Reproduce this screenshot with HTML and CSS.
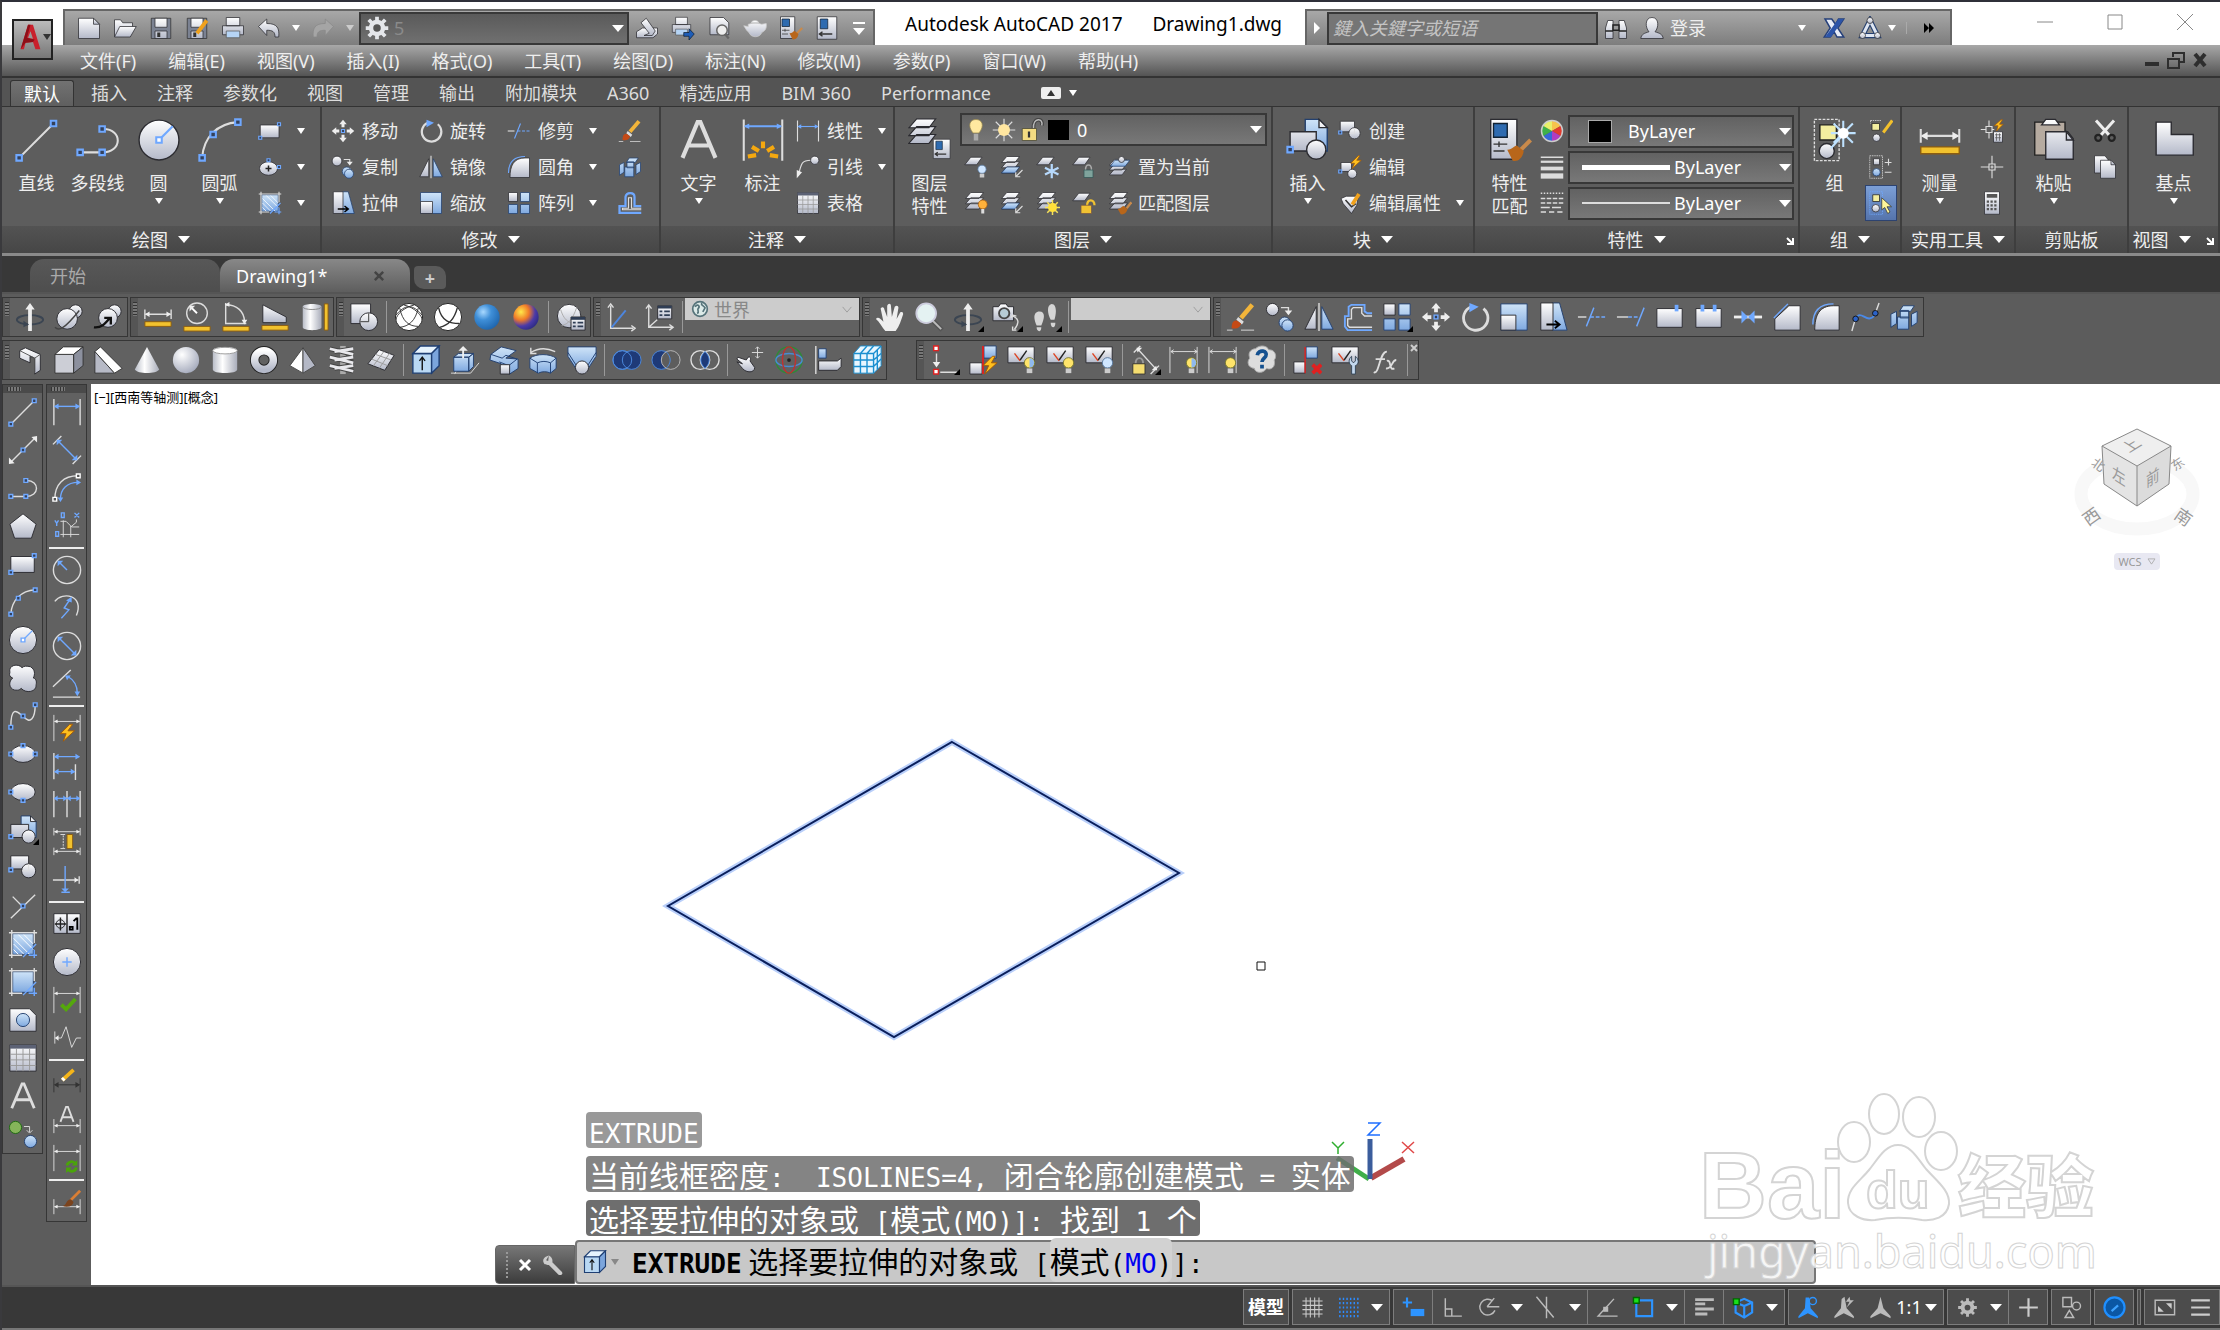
FILE: index.html
```html
<!DOCTYPE html>
<html lang="zh-CN">

<head>
    <meta charset="UTF-8">
    <meta name="viewport" content="width=device-width, initial-scale=1.0">
    <title>Autodesk AutoCAD 2017</title>
    <link rel="stylesheet" href="styles.css">
</head>

<body>
    <!-- icon sprite -->
    <svg class="sprite" aria-hidden="true">
        <defs>
            <linearGradient id="gw" x1="0" y1="0" x2="0" y2="1"><stop offset="0" stop-color="#fff"/><stop offset="1" stop-color="#b4b9c9"/></linearGradient>
            <linearGradient id="gh" x1="0" y1="0" x2="1" y2="0"><stop offset="0" stop-color="#b9bdc8"/><stop offset=".4" stop-color="#fff"/><stop offset="1" stop-color="#a9adba"/></linearGradient>
            <linearGradient id="gb" x1="0" y1="0" x2="0" y2="1"><stop offset="0" stop-color="#cfe4f8"/><stop offset="1" stop-color="#7fa9e0"/></linearGradient>
            <radialGradient id="gs" cx=".35" cy=".3" r=".8"><stop offset="0" stop-color="#fff"/><stop offset="1" stop-color="#9fa5b8"/></radialGradient>
            <radialGradient id="gblue" cx=".35" cy=".3" r=".8"><stop offset="0" stop-color="#a8d8ff"/><stop offset=".4" stop-color="#3f8fd8"/><stop offset="1" stop-color="#1a60a8"/></radialGradient>
            <radialGradient id="gsun" cx=".3" cy=".3" r=".8"><stop offset="0" stop-color="#ffe94a"/><stop offset=".4" stop-color="#f07a28"/><stop offset=".7" stop-color="#4b3aa8"/><stop offset="1" stop-color="#2a2a80"/></radialGradient>
        </defs>

        <!-- draw -->
        <symbol id="line" viewBox="0 0 32 32"><path class="l" d="M3 29 28 4"/><path class="p" d="M1 27h4v4H1zM26 2h4v4h-4z"/></symbol>
        <symbol id="xline" viewBox="0 0 32 32"><path class="l" d="M4 28 28 4"/><path class="f" d="M1 31v-7l6 6zM31 1v7l-6-6z"/><path class="p" d="M14 14h4v4h-4z"/></symbol>
        <symbol id="pline" viewBox="0 0 32 32"><path class="l" d="M3 25h16c15 0 15-17 1-17"/><path class="p" d="M1 23h4v4H1zM17 23h4v4h-4zM17 6h4v4h-4z"/></symbol>
        <symbol id="polygon" viewBox="0 0 32 32"><path class="w" d="M16 3 30 14 25 29H7L2 14z"/></symbol>
        <symbol id="rect" viewBox="0 0 32 32"><path class="w" d="M3 8h25v17H3z"/><path class="p" d="M1 23h4v4H1zM26 5h4v4h-4z"/></symbol>
        <symbol id="arc" viewBox="0 0 32 32"><path class="l" d="M3 29C4 14 14 4 29 3"/><path class="p" d="M1 27h4v4H1zM9 10h4v4H9zM27 1h4v4h-4z"/></symbol>
        <symbol id="circle" viewBox="0 0 32 32"><circle class="w" cx="16" cy="16" r="14.500"/><path class="b" d="M16 16 26 6"/><path class="p q" d="M14 14h4v4h-4z"/></symbol>
        <symbol id="cloud" viewBox="0 0 32 32"><path class="w" d="M15 5c-4-5-15-3-13 5-1 3 0 5 3 6-6 5-3 14 5 13 2 0 3-1 4-2 5 6 17 4 16-4 1-4-1-7-3-7 2-4 2-9-3-12-4-1-7-1-9 1z"/></symbol>
        <symbol id="spline" viewBox="0 0 32 32"><path class="l" d="M3 28c0-28 10-13 13-12 8 10 13 2 13-12"/><path class="p" d="M1 26h4v4H1zM14 14h4v4h-4zM27 2h4v4h-4z"/></symbol>
        <symbol id="ellipse" viewBox="0 0 32 32"><ellipse class="w" cx="16" cy="16" rx="13" ry="9"/><path class="p" d="M1 14h4v4H1zM27 14h4v4h-4zM14 5h4v4h-4z"/></symbol>
        <symbol id="ellipsearc" viewBox="0 0 32 32"><ellipse class="w" cx="16" cy="16" rx="13" ry="9"/><path class="p" d="M1 14h4v4H1zM14 23h4v4h-4z"/></symbol>
        <symbol id="center" viewBox="0 0 32 32"><ellipse class="w" cx="14" cy="18" rx="12" ry="9"/><path d="M14 14v8M10 18h8" stroke="#222" stroke-width="2"/><path class="p" d="M12 5h4v4h-4zM26 14h4v4h-4z"/></symbol>
        <symbol id="insert" viewBox="0 0 32 32"><path class="bl" d="M14 1h10l6 6v17H14z"/><path class="w" d="M24 1v6h6zM3 10h19v14H3z"/><circle class="w" cx="22" cy="23" r="7"/><path class="p" d="M1 21h4v4H1z"/></symbol>
        <symbol id="block" viewBox="0 0 32 32"><path class="w" d="M3 3h19v14H3z"/><circle class="w" cx="22" cy="19" r="7.500"/><path class="l s" d="M22 12v7h-7" stroke="#777"/><path class="p" d="M1 16h4v4H1z"/></symbol>
        <symbol id="point" viewBox="0 0 32 32"><path class="l" d="M3 29 29 4M5 6l11 11"/><path class="p" d="M14 14h4v4h-4z"/></symbol>
        <symbol id="hatch" viewBox="0 0 32 32"><path class="bl" d="M5 5h22v22H5z"/><path d="M6 10l17 17M6 16l11 11M6 22l5 5M11 6l16 16M17 6l10 10" stroke="#fff" stroke-width="1"/><path class="l" d="M1 4h30M4 1v30M1 28h14M28 1v14"/><path class="b" d="M16 30 30 16M22 28h9M28 22v9"/></symbol>
        <symbol id="gradient" viewBox="0 0 32 32"><path class="bl" d="M5 5h22v22H5z"/><path class="l" d="M1 4h30M4 1v30M1 28h14M28 1v14"/><path class="b" d="M16 30 30 16M22 28h9M28 22v9"/></symbol>
        <symbol id="region" viewBox="0 0 32 32"><path class="w" d="M2 4h21l7 7v17H2z"/><circle class="bl" cx="16" cy="16" r="7"/></symbol>
        <symbol id="table" viewBox="0 0 32 32"><path class="w" d="M2 2h28v28H2z"/><path d="M2 2h28v4H2z" fill="#5c6275"/><path d="M9 6v24M16 6v24M23 6v24M2 12h28M2 18h28M2 24h28" stroke="#999"/></symbol>
        <symbol id="mtext" viewBox="0 0 32 32"><path d="M4 29 15 3h2l11 26M8 20h16" fill="none" stroke="#ddd" stroke-width="3"/></symbol>
        <symbol id="addsel" viewBox="0 0 32 32"><circle cx="8" cy="9" r="6.500" fill="#85b55a" stroke="#1d6a10"/><circle class="bl" cx="24" cy="24" r="6.500"/><path class="l s" d="M17 8h6v6M20 12l3 3 3-3"/></symbol>

        <!-- dimension -->
        <symbol id="dimlin" viewBox="0 0 32 32"><path class="l" d="M2 2v28M30 2v28"/><path class="b" d="M3 10h26"/><path class="fb" d="M2 10l5-3v6zM30 10l-5-3v6z"/></symbol>
        <symbol id="dimali" viewBox="0 0 32 32"><path class="l" d="M1 10 10 1M22 31l9-9"/><path class="b" d="M7 7 25 25"/><path class="fb" d="M5 5h6l-6 6zM27 27h-6l6-6z"/></symbol>
        <symbol id="dimarc" viewBox="0 0 32 32"><path class="l" d="M3 28C3 12 12 3 28 3"/><path class="b" d="M9 28c0-11 7-18 19-18"/><path class="fb" d="M9 31l-3-5h6zM31 10l-5-3v6z"/><path class="o" d="M1 26h4v4H1zM26 1h4v4h-4z"/></symbol>
        <symbol id="dimord" viewBox="0 0 32 32"><path class="b s" d="M10 2h3v5h-3zM24 2l5 5M29 2l-5 5M3 10l2 3 2-3M5 13v3M4 22h3v5H4z"/><path class="l s" d="M12 10v18M20 16v12M9 25h20M9 11h6l6 6h8M20 17l6-5V9"/></symbol>
        <symbol id="dimrad" viewBox="0 0 32 32"><circle class="l" cx="16" cy="16" r="14.500"/><path class="b" d="M16 16 8 8"/><path class="fb" d="M6 6h6l-6 6z"/></symbol>
        <symbol id="dimjog" viewBox="0 0 32 32"><path class="l" d="M3 9C11-2 35 2 26 24"/><path class="b" d="M10 27l8-9-5-2 6-9"/><path class="fb" d="M21 4v6l-6-2z"/></symbol>
        <symbol id="dimdia" viewBox="0 0 32 32"><circle class="l" cx="16" cy="16" r="14.500"/><path class="b" d="M8 8 24 24"/><path class="fb" d="M6 6h6l-6 6zM26 26h-6l6-6z"/></symbol>
        <symbol id="dimang" viewBox="0 0 32 32"><path class="l" d="M1 19 20 1M1 30h29"/><path class="b" d="M17 8c7 4 10 10 10 18"/><path class="fb" d="M14 7h6l-4 5zM27 29l-3-5h6z"/></symbol>
        <symbol id="dimquick" viewBox="0 0 32 32"><use href="#dimgrey"/><path class="bolt" d="M19 12 9 22h6l-3 8 12-11h-7l5-7z"/></symbol>
        <symbol id="dimbase" viewBox="0 0 32 32"><path class="l" d="M2 2v28M25 14v17"/><path class="b" d="M3 6h26M3 22h21"/><path class="fb" d="M2 6l5-3v6zM30 6l-5-3v6zM2 22l5-3v6zM25 22l-5-3v6z"/></symbol>
        <symbol id="dimcont" viewBox="0 0 32 32"><path class="l" d="M2 2v28M16 2v28M30 2v28"/><path class="b" d="M3 10h26"/><path class="fb" d="M2 10l4-3v6zM16 10l-4-3v6zM16 10l4-3v6zM30 10l-4-3v6z"/></symbol>
        <symbol id="dimspace" viewBox="0 0 32 32"><path class="l s" d="M2 1v8M30 1v8M2 22v8M30 22v8M3 5h26M3 26h26M9 8h5M9 23h5"/><path class="l s" d="M12 9v13" stroke-dasharray="2 1"/><path class="f" d="M2 5l4-2v4zM30 5l-4-2v4zM2 26l4-2v4zM30 26l-4-2v4z"/><path class="rule" d="M16 8h6v15h-6z"/></symbol>
        <symbol id="dimbreak" viewBox="0 0 32 32"><path class="l" d="M1 16h27M29 12v8"/><path class="b" d="M14 1v26M10 29h9"/><path class="f" d="M28 16l-4-3v6z"/><path class="fb" d="M14 29l-4-4h8z"/></symbol>
        <symbol id="tol" viewBox="0 0 32 32"><path class="w" d="M2 5h28v21H2z"/><path d="M16 5v21M9 9v14M3 16h12" stroke="#222" stroke-width="1.500"/><circle cx="9" cy="16" r="4.500" fill="none" stroke="#222"/><path d="M19 19h3v3h-3zM23 13l3-3h1v12" fill="none" stroke="#000" stroke-width="2"/></symbol>
        <symbol id="cmark" viewBox="0 0 32 32"><circle class="w" cx="16" cy="16" r="14.500"/><path class="b" d="M16 11v10M11 16h10"/></symbol>
        <symbol id="dimgrey" viewBox="0 0 32 32"><path class="l s" d="M2 2v28M30 2v28M3 9h26"/><path class="f" d="M2 9l4-2v4zM30 9l-4-2v4z"/></symbol>
        <symbol id="inspect" viewBox="0 0 32 32"><use href="#dimgrey"/><path d="M10 21l5 5 10-11" fill="none" stroke="#55a80c" stroke-width="4"/></symbol>
        <symbol id="jogline" viewBox="0 0 32 32"><path class="l s" d="M3 9v13M4 16h6l5-12 6 22 5-10h5"/><path class="f" d="M3 16l4-3v6z"/></symbol>
        <symbol id="dimedit" viewBox="0 0 32 32"><path d="M2 12v15M30 12v15M3 19h26" stroke="#333"/><path d="M2 19l5-3v6zM30 19l-5-3v6z" fill="#333"/><path d="M11 14 23 3" stroke="#f5b51a" stroke-width="4"/><path d="M11 14l2-2" stroke="#fff" stroke-width="4"/></symbol>
        <symbol id="dimtedit" viewBox="0 0 32 32"><path d="M9 18 15 2h2l6 16M11 13h10" fill="none" stroke="#ddd" stroke-width="2"/><path class="l s" d="M2 15v15M30 15v15M3 22h26"/><path class="f" d="M2 22l4-2v4zM30 22l-4-2v4z"/></symbol>
        <symbol id="dimupdate" viewBox="0 0 32 32"><use href="#dimgrey"/><path d="M16 24a5 5 0 0 1 9-2M26 26a5 5 0 0 1-9 2" fill="none" stroke="#4aa30a" stroke-width="3"/><path d="M27 18v6h-6zM15 32v-6h6z" fill="#4aa30a"/></symbol>
        <symbol id="dimstyle" viewBox="0 0 32 32"><path class="l s" d="M2 13v16M30 13v16M3 21h26"/><path class="f" d="M2 21l4-2v4zM30 21l-4-2v4z"/><path d="M20 14 30 4" stroke="#d97e35" stroke-width="3"/><path d="M11 20c5 0 3-6 9-7l3 3c-1 5-7 6-12 4z" fill="#7b431d"/></symbol>

        <!-- modify -->
        <symbol id="erase" viewBox="0 0 32 32"><path d="M16 17 28 3" stroke="#f3b53a" stroke-width="5"/><path d="M13 16l6 5-2 3-6-5z" fill="#ddd"/><path d="M6 28c0-6 2-9 6-8l4 3c-1 5-5 6-10 5z" fill="#c54a16"/><path class="l s" d="M1 30h6M16 30h14"/></symbol>
        <symbol id="copy" viewBox="0 0 32 32"><circle class="w" cx="8" cy="8" r="6.500"/><circle class="bl" cx="21" cy="22" r="6"/><circle class="bl" cx="24" cy="25" r="6"/><path class="l" d="M17 6h8v5"/><path class="f" d="M25 14l-4-5h8z"/></symbol>
        <symbol id="mirror" viewBox="0 0 32 32"><path class="w" d="M13 5v24H1z"/><path class="bl" d="M19 5v24h12z"/><path class="l" d="M16 1v30"/></symbol>
        <symbol id="offset" viewBox="0 0 32 32"><path d="M31 30H5l-3-4V15h4V5l3-2h14v7l3 2h5" fill="none" stroke="#6fa8ff" stroke-width="2"/><path class="l" d="M31 27H7l-2-2v-7h4V8l2-2h9v6l3 3h8"/></symbol>
        <symbol id="stamp" viewBox="0 0 32 32"><path d="M31 29H2v-9h8V8c1-7 12-7 12 0v12h9" fill="none" stroke="#6fa8ff" stroke-width="3"/><path class="l" d="M31 25H6v-2h8V9h4v14h13"/></symbol>
        <symbol id="array" viewBox="0 0 32 32"><path class="w" d="M2 2h12v12H2z"/><path class="bl" d="M18 2h12v12H18zM2 18h12v12H2zM18 18h12v12H18z"/></symbol>
        <symbol id="move" viewBox="0 0 32 32"><path class="f" d="M16 1l5 6h-3v4h-4V7h-3zM16 31l5-6h-3v-4h-4v4h-3zM1 16l6-5v3h4v4H7v3zM31 16l-6-5v3h-4v4h4v3z"/><path class="p" d="M14 14h4v4h-4z"/></symbol>
        <symbol id="rotate" viewBox="0 0 32 32"><path d="M12 5a13 13 0 1 0 13 2" fill="none" stroke="#ddd" stroke-width="3"/><path class="fb" d="M10 1l10 4-10 6z"/></symbol>
        <symbol id="scale" viewBox="0 0 32 32"><path class="bl" d="M2 2h28v28H2z"/><path class="w" d="M2 14h16v16H2z"/></symbol>
        <symbol id="stretch" viewBox="0 0 32 32"><path class="bl" d="M15 1h8l8 29H15z"/><path class="w" d="M3 1h13v29H3z"/><path d="M9 24h13M18 20l5 4-5 4" fill="none" stroke="#000" stroke-width="2"/></symbol>
        <symbol id="trim" viewBox="0 0 32 32"><path class="l" d="M1 16h9"/><path class="b" d="M10 26 18 6"/><path class="b" d="M14 16h17" stroke-dasharray="4 2"/></symbol>
        <symbol id="extend" viewBox="0 0 32 32"><path class="l" d="M1 16h12"/><path class="b" d="M13 16h11" stroke-dasharray="4 2"/><path class="b" d="M22 26 30 6"/></symbol>
        <symbol id="breakpt" viewBox="0 0 32 32"><path class="w" d="M2 7h27v20H2z"/><path class="fb" d="M21 3h4v7h-4z"/></symbol>
        <symbol id="break" viewBox="0 0 32 32"><path class="w" d="M2 7h27v20H2z"/><path class="fb" d="M7 3h4v7H7zM20 3h4v7h-4z"/></symbol>
        <symbol id="join" viewBox="0 0 32 32"><path d="M1 16h30" stroke="#eee" stroke-width="3"/><path class="fb" d="M9 9l7 7-7 7zM23 9l-7 7 7 7z"/></symbol>
        <symbol id="chamfer" viewBox="0 0 32 32"><path class="w" d="M3 30V18L18 4h12v26z"/><path class="b" d="M2 17 17 2"/></symbol>
        <symbol id="fillet" viewBox="0 0 32 32"><path class="w" d="M4 30C4 14 9 4 24 4h6v26z"/><path class="b" d="M2 24C2 8 10 2 24 2"/></symbol>
        <symbol id="blend" viewBox="0 0 32 32"><path class="l" d="M2 31l4-14M27 12l4-11"/><path d="M6 18c6-12 12 8 21-5" fill="none" stroke="#4b8ae8" stroke-width="2"/><circle cx="6" cy="18" r="3" fill="#2b62c8" stroke="#111"/><circle cx="27" cy="12" r="3" fill="#2b62c8" stroke="#111"/></symbol>
        <symbol id="explode" viewBox="0 0 32 32"><path class="bl" d="M15 4h12l-4 6H11zM2 13l6-3v13l-6 4zM24 13l6-3v12l-6 4zM12 9h9v8h-9zM9 16h12v13H9z"/></symbol>

        <!-- orbit, measure and visual styles -->
        <symbol id="orbit" viewBox="0 0 32 32"><ellipse cx="16" cy="19" rx="14" ry="5" fill="none" stroke="#3b4552" stroke-width="2"/><path class="f" d="M16 1l5 7h-3v23h-4V8h-3z"/><path d="M9 20l6 4-6 3z" fill="#3b4552"/></symbol>
        <symbol id="forbit" viewBox="0 0 32 32"><circle class="w" cx="23" cy="10" r="7"/><circle class="w" cx="14" cy="18" r="11"/><path d="M1 27c4 4 9 3 26-18" fill="none" stroke="#444" stroke-width="1.500"/></symbol>
        <symbol id="corbit" viewBox="0 0 32 32"><circle class="w" cx="23" cy="10" r="7"/><circle class="w" cx="16" cy="17" r="10"/><path d="M1 27c8 1 12-4 17-10M12 17h7v7" fill="none" stroke="#111" stroke-width="2.500"/></symbol>
        <symbol id="dist" viewBox="0 0 32 32"><path class="l" d="M2 8v10M30 8v10M3 13h26"/><path class="f" d="M2 13l5-3v6zM30 13l-5-3v6z"/><path class="rule" d="M2 21h28v5H2z"/></symbol>
        <symbol id="mrad" viewBox="0 0 32 32"><circle class="l" cx="16" cy="12" r="11"/><path d="M16 12 10 6" stroke="#fff" stroke-width="2"/><path class="f" d="M8 4h6l-6 6z"/><path class="rule" d="M2 26h28v5H2z"/></symbol>
        <symbol id="mang" viewBox="0 0 32 32"><path class="l" d="M5 1v22h22M5 3c12 0 20 7 20 18"/><path class="f" d="M4 3l5-3v5zM25 24l-3-5h6z"/><path class="rule" d="M2 26h28v5H2z"/></symbol>
        <symbol id="marea" viewBox="0 0 32 32"><path class="w" d="M3 3v19h25v-6z"/><path class="rule" d="M2 25h28v5H2z"/></symbol>
        <symbol id="mvol" viewBox="0 0 32 32"><path d="M4 5c0-4 20-4 20 0v22c0 4-20 4-20 0z" fill="url(#gh)"/><path d="M4 5c0 4 20 4 20 0" fill="none" stroke="#888"/><path class="rule" d="M27 2h4v28h-4z"/></symbol>
        <symbol id="wf2d" viewBox="0 0 32 32"><path class="w" d="M2 2h21v21H2z"/><circle class="w" cx="21" cy="21" r="9.500"/><path d="M12 21h9V12" fill="none" stroke="#333"/></symbol>
        <symbol id="wf" viewBox="0 0 32 32"><circle cx="16" cy="16" r="14.500" fill="#fff" stroke="#222"/><path d="M6 6c3 15 10 20 20 20M26 6C23 20 16 26 6 27M2 14C12 2 20 2 30 14M10 3c13 3 20 12 20 16M22 3C10 6 3 13 2 19" fill="none" stroke="#333"/></symbol>
        <symbol id="hidden" viewBox="0 0 32 32"><circle cx="16" cy="16" r="14.500" fill="#fff" stroke="#222"/><path d="M6 6c3 15 13 17 22 17M26 6C23 18 16 25 7 27" fill="none" stroke="#333" stroke-width="1.500"/></symbol>
        <symbol id="realistic" viewBox="0 0 32 32"><circle cx="16" cy="16" r="13.500" fill="url(#gblue)"/></symbol>
        <symbol id="concept" viewBox="0 0 32 32"><circle cx="16" cy="16" r="13.500" fill="url(#gsun)"/></symbol>
        <symbol id="vsman" viewBox="0 0 32 32"><circle class="w" cx="14" cy="15" r="12.500"/><path d="M5 8c4 14 12 16 21 15M22 6c-4 12-9 18-16 19" fill="none" stroke="#aaa"/><use href="#dlg" x="15" y="15" width="17" height="16"/></symbol>
        <symbol id="dlg" viewBox="0 0 17 16"><path class="w" d="M1 1h15v14H1z"/><path d="M1 1h15v3H1z" fill="#2f3d54"/><path d="M3 7h3M3 11h3M8 7h6M8 11h6" stroke="#2f3d54" stroke-width="2"/></symbol>
        <symbol id="ucs" viewBox="0 0 32 32"><path class="l" d="M5 4v24h24M2 6l3-4 3 4M27 25l4 3-4 3"/><path d="M6 27 21 9" stroke="#4d86df" stroke-width="2"/></symbol>
        <symbol id="ucsman" viewBox="0 0 32 32"><path class="l" d="M4 4v23h25M1 7l3-4 3 4M26 24l4 3-4 3M4 27l9-8"/><use href="#dlg" x="12" y="3" width="18" height="16"/></symbol>
        <symbol id="globe" viewBox="0 0 32 32"><circle cx="16" cy="16" r="13" fill="#dceae8" stroke="#56737a" stroke-width="3"/><path d="M7 12c6-7 9 0 6 3s3 6-2 9M19 5c-2 5 3 4 6 9l-4 7" fill="none" stroke="#56737a" stroke-width="3"/></symbol>

        <!-- navigation -->
        <symbol id="pan" viewBox="0 0 32 32"><path class="f" d="M11 31C7 26 5 21 1 18c2-3 5 0 8 3L6 7c2-3 4-1 4 1l3 8V4c1-3 4-3 4 0l1 12 3-11c2-2 4-1 4 1l-2 12 4-7c3-1 3 1 3 2-2 6-4 13-8 18z"/></symbol>
        <symbol id="zoom" viewBox="0 0 32 32"><path d="M20 20l10 10" stroke="#555" stroke-width="5"/><path d="M20 20l9 9" stroke="#bbb" stroke-width="2"/><circle cx="13" cy="12" r="10.500" fill="#e4f2f2" stroke="#ccd" stroke-width="2"/></symbol>
        <symbol id="camera" viewBox="0 0 32 32"><path class="w" d="M1 5h6l2-3h6l2 3h6v15H1z"/><circle cx="13" cy="12" r="5.500" fill="#b6cbd6" stroke="#444" stroke-width="2"/><path class="l" d="M22 15c6 2 8 7 2 14M20 17l2-3 4 1M22 26v4h4"/></symbol>
        <symbol id="walk" viewBox="0 0 32 32"><path d="M9 10c6 0 6 6 2 15H6C2 17 3 10 9 10zM6 27h5c0 6-5 5-5 0zM22 2c6 0 5 11 3 17h-4c-4-8-4-16 1-17zM21 22h5c0 7-5 6-5 0z" fill="#d5d5d5"/></symbol>

        <!-- solids -->
        <symbol id="psolid" viewBox="0 0 32 32"><path class="w" d="M5 6l6-3 16 7v17l-6 4V14l-5-2v7l-11-5z"/><path d="M5 6l16 8 6-4M21 14v16" fill="none" stroke="#555"/></symbol>
        <symbol id="box" viewBox="0 0 32 32"><path d="M1 10h20v20H1z" fill="#ccced6" stroke="#333"/><path d="M1 10l9-8h21l-10 8z" fill="#fff" stroke="#333"/><path d="M31 2v20l-10 8V10z" fill="#8c909e" stroke="#333"/></symbol>
        <symbol id="wedge" viewBox="0 0 32 32"><path d="M2 7v23h21z" fill="#b7bac6" stroke="#333"/><path d="M2 7l6-5 23 23-8 5z" fill="#fff" stroke="#333"/></symbol>
        <symbol id="cone" viewBox="0 0 32 32"><path d="M16 2 29 26c-3 5-23 5-26 0z" fill="url(#gh)"/></symbol>
        <symbol id="sphere" viewBox="0 0 32 32"><circle cx="16" cy="16" r="14" fill="url(#gs)"/></symbol>
        <symbol id="cyl" viewBox="0 0 32 32"><path d="M3 6c0-5 26-5 26 0v20c0 5-26 5-26 0z" fill="url(#gh)"/><ellipse cx="16" cy="6" rx="13" ry="3.500" fill="#fff" stroke="#999"/></symbol>
        <symbol id="torus" viewBox="0 0 32 32"><circle cx="16" cy="16" r="10" fill="none" stroke="#222" stroke-width="10"/><circle cx="16" cy="16" r="10" fill="none" stroke="url(#gw)" stroke-width="8"/></symbol>
        <symbol id="pyr" viewBox="0 0 32 32"><path d="M16 3 2 22l14 8z" fill="#fff" stroke="#444"/><path d="M16 3l13 19-13 8z" fill="#b4b8c6" stroke="#444"/></symbol>
        <symbol id="helix" viewBox="0 0 32 32"><path d="M17 1v30" stroke="#aaa" stroke-width="6"/><path d="M3 4l25 6M3 13l25 6M3 22l25 6M28 4 8 7M28 13 8 16M28 22 8 25" stroke="#444" stroke-width="5"/><path d="M3 4l25 6M3 13l25 6M3 22l25 6M28 4 8 7M28 13 8 16M28 22 8 25" stroke="#e8e8ec" stroke-width="3"/></symbol>
        <symbol id="plane" viewBox="0 0 32 32"><path class="w" d="M14 5l16 6-10 16L2 20z"/><path d="M19 7 8 22M25 9 14 25M10 10l17 6M6 15l17 7" stroke="#999"/></symbol>
        <symbol id="extrude" viewBox="0 0 32 32"><path d="M2 9h20v21H2z" fill="#b9d8f3" stroke="#1f3f73" stroke-width="1.500"/><path d="M2 9l8-8h20l-8 8z" fill="#e6f3fd" stroke="#1f3f73" stroke-width="1.500"/><path d="M30 1v21l-8 8V9z" fill="#7ba5dc" stroke="#1f3f73" stroke-width="1.500"/><path d="M12 27V14M9 17l3-4 3 4" fill="none" stroke="#111" stroke-width="1.500"/></symbol>
        <symbol id="presspull" viewBox="0 0 32 32"><path class="l s" d="M1 30h21l9-11M5 31l4-8"/><path class="bl" d="M4 13h16v15H4zM4 13l5-4h16l-5 4zM25 9v14l-5 5V13z"/><path class="f" d="M14 1l5 5h-4v8h-2V6H9z"/></symbol>
        <symbol id="sweep" viewBox="0 0 32 32"><path class="bl" d="M2 10 13 2l16 4-11 8 13 1v10l-9 6-9-4v-7L1 16z"/><path d="M2 10l12 4 4-3 12 4-9 7-10-4" fill="none" stroke="#1f3f73"/><path class="w" d="M12 21h10v10H12z"/></symbol>
        <symbol id="revolve" viewBox="0 0 32 32"><path class="bl" d="M2 14c7-5 21-5 28 0v11l-6 5c-4-2-9-2-13 0l-9-5z"/><path d="M2 14l8 5c5-2 9-2 14 0l6-5M10 19v11M24 19v11" fill="none" stroke="#1f3f73"/><path class="l" d="M3 8c8-5 17-5 26-1M3 3v6h6"/></symbol>
        <symbol id="loft" viewBox="0 0 32 32"><path class="bl" d="M1 2h30v10l-9 14H10L1 12z"/><path d="M1 8 10 22M31 8l-9 14" stroke="#1f3f73"/><circle class="w" cx="16" cy="24" r="7"/></symbol>
        <symbol id="union" viewBox="0 0 32 32"><circle cx="11" cy="16" r="10" fill="#1e3a78" stroke="#4d8be0"/><circle cx="21" cy="16" r="10" fill="#1e3a78" stroke="#4d8be0"/><circle cx="11" cy="16" r="10" fill="none" stroke="#4d8be0"/></symbol>
        <symbol id="subtract" viewBox="0 0 32 32"><circle cx="11" cy="16" r="10" fill="#1e3a78" stroke="#4d8be0"/><circle cx="21" cy="16" r="10" fill="#5d5d5d" stroke="#bbb"/><path d="M16 7c6 6 6 12 0 18" fill="none" stroke="#4d8be0"/></symbol>
        <symbol id="intersect" viewBox="0 0 32 32"><circle class="l" cx="11" cy="16" r="10"/><circle class="l" cx="21" cy="16" r="10"/><path d="M16 7c6 6 6 12 0 18-6-6-6-12 0-18z" fill="#1e3a78" stroke="#4d8be0"/></symbol>
        <symbol id="move3d" viewBox="0 0 32 32"><path class="w" d="M3 13l9 3 2-3c3-1 3 2 2 4l5 7c0 6-9 6-13 1l-6-7 6 2-6-5z"/><path class="l s" d="M24 2v12M18 8h12M22 4l2-2 2 2M22 12l2 2 2-2"/></symbol>
        <symbol id="rot3d" viewBox="0 0 32 32"><circle class="ring" cx="16" cy="16" r="14" stroke="#2f8a38"/><ellipse class="ring" cx="16" cy="16" rx="14" ry="7" stroke="#4a8ad0"/><ellipse class="ring" cx="16" cy="16" rx="7" ry="14" stroke="#c03030"/><circle cx="16" cy="16" r="2" fill="#222"/></symbol>
        <symbol id="align3d" viewBox="0 0 32 32"><path class="l" d="M3 1v30"/><path class="bl" d="M6 4h8v10H6z"/><path class="w" d="M6 17h20l4-3v9l-4 4H6z"/></symbol>
        <symbol id="array3d" viewBox="0 0 32 32"><path d="M2 9 9 1h22v21l-8 8H2z" fill="#e8f6ff" stroke="#1b8fd0"/><path d="M2 9h21v21M23 9l8-8M9 9v21M16 9v21M2 16h21l8-7M2 23h21l8-8M9 9l7-8M16 9l7-8M27 5v21" fill="none" stroke="#1b8fd0" stroke-width="1.500"/></symbol>

        <!-- parametric -->
        <symbol id="autocon" viewBox="0 0 32 32"><path class="red" d="M5 1h5v5H5zM5 26h5v5H5z"/><path class="l" d="M8 9v10M12 29h18"/><path class="f" d="M8 24l-4-6h8z"/></symbol>
        <symbol id="gcon" viewBox="0 0 32 32"><path class="bl" d="M17 1h13v13H17z"/><path class="w" d="M2 19h13v12H2z"/><path d="M16 1v30" stroke="#d22" stroke-width="2"/><path class="bolt" d="M26 12 16 22h6l-4 9 13-12h-6l4-7z"/></symbol>
        <symbol id="conbar" viewBox="0 0 32 32"><path class="w" d="M1 2h28v17H1z"/><path d="M8 9l6 8" stroke="#d42" stroke-width="1.500"/><path d="M14 16l7-10" stroke="#222" stroke-width="1.500"/></symbol>
        <symbol id="bulb" viewBox="0 0 32 32"><circle cx="24" cy="19" r="5.500" fill="#ffe46a" stroke="#7a7a30"/><path d="M21 25h6v5h-6z" fill="#ccc"/></symbol>
        <symbol id="bulbb" viewBox="0 0 32 32"><circle cx="24" cy="19" r="5.500" fill="#cfe6ff" stroke="#5a7aa0"/><path d="M21 25h6v5h-6z" fill="#ccc"/></symbol>
        <symbol id="conhalf" viewBox="0 0 32 32"><use href="#conbar"/><use href="#bulb"/><path d="M24 14a5 5 0 0 1 0 10z" fill="#8fb9ee"/></symbol>
        <symbol id="conshow" viewBox="0 0 32 32"><use href="#conbar"/><use href="#bulb"/></symbol>
        <symbol id="conhide" viewBox="0 0 32 32"><use href="#conbar"/><use href="#bulbb"/></symbol>
        <symbol id="dcon" viewBox="0 0 32 32"><path class="l" d="M8 4 28 26M4 8l7-7M22 31l9-9"/><path class="f" d="M7 3h6l-5 5zM29 27h-6l5-5z"/><path d="M6 20c0-8 8-8 8 0" fill="none" stroke="#999" stroke-width="2"/><path d="M3 20h13v11H3z" fill="#f5dd70" stroke="#333"/></symbol>
        <symbol id="dconhalf" viewBox="0 0 32 32"><path class="l s" d="M1 2v28M30 2v28M2 7h28M5 5 2 7l3 2M27 5l3 2-3 2"/><use href="#bulb"/><path d="M24 14a5 5 0 0 1 0 10z" fill="#8fb9ee"/></symbol>
        <symbol id="dconshow" viewBox="0 0 32 32"><path class="l s" d="M1 2v28M30 2v28M2 7h28M5 5 2 7l3 2M27 5l3 2-3 2"/><use href="#bulb"/></symbol>
        <symbol id="infer" viewBox="0 0 32 32"><path d="M9 4c5-5 13-3 14 1 8 0 9 8 6 11 2 8-4 11-8 9-5 7-13 4-13 0-8-1-8-8-5-11-3-7 3-10 6-10z" fill="#ddd" stroke="#aaa"/><path d="M11 11c1-7 12-5 9 1-1 2-4 3-4 6M16 21v4" fill="none" stroke="#14508f" stroke-width="4"/></symbol>
        <symbol id="delcon" viewBox="0 0 32 32"><path class="bl" d="M15 2h12v12H15z"/><path class="w" d="M2 18h12v12H2z"/><path d="M14 2v28" stroke="#d22" stroke-width="1.500"/><path d="M22 21l9 9M31 21l-9 9" stroke="#e02020" stroke-width="4"/></symbol>
        <symbol id="conset" viewBox="0 0 32 32"><use href="#conbar"/><path d="M26 12v5l-2 2-2-2v-5c-4 3-3 9 0 10v9h4v-9c4-1 4-7 0-10z" fill="#c3d8ee" stroke="#345"/></symbol>
        <symbol id="params" viewBox="0 0 32 32"><path d="M4 29c6 3 6-22 14-22M6 15h10M18 17c5-2 2 11 8 8M28 16c-5 0-4 10-11 9" fill="none" stroke="#ddd" stroke-width="2"/></symbol>

        <!-- file and title icons -->
        <symbol id="new" viewBox="0 0 32 32"><path class="w" d="M2 3h20l8 8v19H2z"/><path class="w" d="M22 3v8h8z"/></symbol>
        <symbol id="open" viewBox="0 0 32 32"><path class="w" d="M2 28V5h8l3 4h13v5"/><path class="w" d="M2 28 9 14h22l-8 14z"/></symbol>
        <symbol id="save" viewBox="0 0 32 32"><path d="M3 3h26v27H3z" fill="#7b8292" stroke="#333"/><path class="w" d="M8 3h16v12H8zM8 20h16v10H8z"/><path d="M11 22h4v6h-4z" fill="#333"/></symbol>
        <symbol id="saveas" viewBox="0 0 32 32"><use href="#save"/><path d="M16 23 29 6" stroke="#f0a11c" stroke-width="5"/></symbol>
        <symbol id="print" viewBox="0 0 32 32"><path class="w" d="M7 2h18v11H7zM2 13h28v12H2z"/><path d="M7 20h18v9H7z" fill="#b5d4f5" stroke="#555"/></symbol>
        <symbol id="undo" viewBox="0 0 32 32"><path class="w" d="M2 14 13 4v6c14 0 17 6 16 18h-5c0-7-3-9-11-9v7z"/></symbol>
        <symbol id="redo" viewBox="0 0 32 32"><path d="M30 14 19 4v6C5 10 2 16 3 28h5c0-7 3-9 11-9v7z" fill="#a5a5a5" stroke="#888"/></symbol>
        <symbol id="gear" viewBox="0 0 32 32"><path d="M16 1v30M1 16h30M5 5l22 22M27 5 5 27" stroke="#e4e6ea" stroke-width="5"/><circle cx="16" cy="16" r="8" fill="none" stroke="#e4e6ea" stroke-width="6"/><circle cx="16" cy="16" r="5" fill="#555"/></symbol>
        <symbol id="sheet" viewBox="0 0 32 32"><path class="w" d="M2 21l8-5h20v8l-6 5H2z"/><path class="w" d="M8 9l7-6 12 17-4 6H12l7-3z"/></symbol>
        <symbol id="plot" viewBox="0 0 32 32"><use href="#print" width="28" height="28"/><path d="M17 22h7v-5l7 7-7 8v-5h-7z" fill="#1e5db8" stroke="#123"/></symbol>
        <symbol id="preview" viewBox="0 0 32 32"><path class="w" d="M4 2h18l7 7v16H4z"/><circle cx="20" cy="19" r="7" fill="#eee" stroke="#666" stroke-width="2"/><path d="M24 24l5 6" stroke="#666" stroke-width="3"/></symbol>
        <symbol id="teapot" viewBox="0 0 32 32"><path d="M7 11c5-2 14-2 18 0l6-1c1 7-2 10-6 12-2 7-14 8-17 0-3-2-5-6-7-9l6 1zM11 9c1-4 9-4 10 0z" fill="url(#gw)" stroke="#ccc"/></symbol>
        <symbol id="prop" viewBox="0 0 32 32"><path class="w" d="M3 1h26v30H3z"/><path d="M7 4h10v13H7z" fill="#2e6bb0" stroke="#123"/><path d="M7 24h16M10 21l-4 3 4 3" fill="none" stroke="#333" stroke-width="2"/></symbol>
        <symbol id="match" viewBox="0 0 32 32"><path class="w" d="M2 1h19v29H2z"/><path d="M4 4h10v10H4z" fill="#2e6bb0" stroke="#123"/><path d="M4 19h10M4 24h8M8 17v4" stroke="#333"/><path d="M23 24 31 16" stroke="#c98a4b" stroke-width="3"/><path d="M14 23c4 0 5-3 7-3l5 4c-1 6-5 8-8 7z" fill="#b8661a"/></symbol>
        <symbol id="binoc" viewBox="0 0 32 32"><path class="w" d="M5 6h7v24H2V16zM27 6h-7v24h10V16z"/><path d="M12 12h8v7h-8zM2 20h10M20 20h10" fill="#999" stroke="#222" stroke-width="2"/></symbol>
        <symbol id="user" viewBox="0 0 32 32"><path class="w" d="M1 30c1-6 5-7 11-9-5-5-6-19 4-19s9 14 4 19c6 2 10 3 11 9z"/></symbol>
        <symbol id="exch" viewBox="0 0 32 32"><path d="M4 4h9l5 7 4-7h7l-8 12 8 12h-9l-4-7-5 7H3l8-12z" fill="#e6ebf6" stroke="#26407a" stroke-width="2"/><path d="M22 4h7L12 28H4z" fill="#2c54a8"/></symbol>
        <symbol id="a360" viewBox="0 0 32 32"><path d="M16 6 6 26h20z" fill="none" stroke="#26406f" stroke-width="7"/><path d="M16 6 6 26h20z" fill="none" stroke="#dfe6f2" stroke-width="4"/><circle cx="16" cy="6" r="4" class="w"/><circle cx="6" cy="26" r="4" class="w"/><circle cx="26" cy="26" r="4" class="w"/></symbol>

        <!-- layers and properties -->
        <symbol id="stack" viewBox="0 0 32 32"><path class="w" d="M9 16h17l-6 8H2zM9 9h17l-6 8H2zM9 2h17l-6 8H2z"/></symbol>
        <symbol id="layerprop" viewBox="0 0 32 32"><use href="#stack" x="-1" y="-1" width="26" height="26"/><use href="#prop" x="17" y="13" width="15" height="19"/></symbol>
        <symbol id="sheet1" viewBox="0 0 32 32"><path class="w" d="M9 3h15l-7 10H1z"/></symbol>
        <symbol id="loff" viewBox="0 0 32 32"><use href="#sheet1"/><use href="#bulbb"/></symbol>
        <symbol id="liso" viewBox="0 0 32 32"><use href="#stack"/><path class="bl" d="M9 16h17l-6 8H2z"/><path class="l" d="M30 20l-8 8M21 23v6h6"/></symbol>
        <symbol id="lfrz" viewBox="0 0 32 32"><use href="#sheet1"/><path d="M21 12v19M12 17l18 9M30 17l-18 9" stroke="#b6d8fb" stroke-width="3"/></symbol>
        <symbol id="llck" viewBox="0 0 32 32"><use href="#sheet1"/><path d="M18 20c0-9 8-9 8 0" fill="none" stroke="#aaa" stroke-width="2"/><path d="M16 20h12v10H16z" fill="#7fa39c" stroke="#355"/></symbol>
        <symbol id="lcur" viewBox="0 0 32 32"><use href="#stack" y="4" width="30" height="30"/><path class="bl" d="M9 7h20l-6 8H3z"/><circle class="w" cx="18" cy="6" r="4"/></symbol>
        <symbol id="lon" viewBox="0 0 32 32"><use href="#stack"/><circle cx="25" cy="18" r="6" fill="#ffb13b" stroke="#a55b10"/><path d="M23 24h4v6h-4z" fill="#ddd"/></symbol>
        <symbol id="lthw" viewBox="0 0 32 32"><use href="#stack"/><path d="M22 12v20M12 22h20M15 15l14 14M29 15 15 29" stroke="#f6e25c" stroke-width="2"/><circle cx="22" cy="22" r="6" fill="#ffe03a"/></symbol>
        <symbol id="lulk" viewBox="0 0 32 32"><use href="#sheet1"/><path d="M20 20c0-10 10-10 10-1" fill="none" stroke="#f1c232" stroke-width="3"/><path d="M12 19h14v11H12z" fill="#f1c232" stroke="#754"/></symbol>
        <symbol id="lmch" viewBox="0 0 32 32"><use href="#stack"/><path d="M25 23 31 15" stroke="#c98a4b" stroke-width="3"/><path d="M13 24c4 0 5-4 8-4l5 4c-1 5-5 8-9 7z" fill="#b8661a"/></symbol>
        <symbol id="on" viewBox="0 0 32 32"><path d="M12 20C4 10 8 2 16 2s12 8 4 18z" fill="#ffe9a0" stroke="#9a8a50"/><path d="M13 21h6v9h-6z" fill="#aaa"/></symbol>
        <symbol id="sun" viewBox="0 0 32 32"><path d="M16 1v30M1 16h30M5 5l22 22M27 5 5 27" stroke="#ddd" stroke-width="1.500"/><circle cx="16" cy="16" r="8" fill="#ffe6a0"/></symbol>
        <symbol id="unlock" viewBox="0 0 32 32"><path d="M18 14C17-2 32 0 29 10" fill="none" stroke="#444" stroke-width="5"/><path d="M18 14C17-2 32 0 29 10" fill="none" stroke="#bbb" stroke-width="2"/><path d="M3 14h19v16H3z" fill="#f4dc82" stroke="#443"/><path d="M12 18v8" stroke="#333" stroke-width="3"/></symbol>
        <symbol id="wheel" viewBox="0 0 32 32"><path d="M16 16V2a14 14 0 0 1 12 7z" fill="#f6c34c"/><path d="M16 16 28 9a14 14 0 0 1 0 14z" fill="#e23b2e"/><path d="M16 16l12 7a14 14 0 0 1-12 7z" fill="#b03cc0"/><path d="M16 16v14a14 14 0 0 1-12-7z" fill="#3767d8"/><path d="M16 16 4 23a14 14 0 0 1 0-14z" fill="#3fb04a"/><path d="M16 16 4 9a14 14 0 0 1 12-7z" fill="#e8ef6a"/><circle cx="16" cy="16" r="14" fill="none" stroke="#ccc" stroke-width="2"/></symbol>
        <symbol id="lweight" viewBox="0 0 32 32"><path d="M1 3h30" stroke="#ddd" stroke-width="2"/><path d="M1 9h30" stroke="#ddd" stroke-width="3"/><path d="M1 18h30" stroke="#ddd" stroke-width="5"/><path d="M1 28h30" stroke="#ddd" stroke-width="7"/></symbol>
        <symbol id="ltype" viewBox="0 0 32 32"><path d="M1 3h30" stroke="#ddd" stroke-width="2" stroke-dasharray="2 2"/><path d="M1 10h30M1 16h30" stroke="#ddd" stroke-width="2" stroke-dasharray="6 2"/><path d="M1 22h30" stroke="#ddd" stroke-width="2" stroke-dasharray="12 3"/><path d="M1 28h30" stroke="#ddd" stroke-width="2" stroke-dasharray="7 4"/></symbol>
        <symbol id="leader" viewBox="0 0 32 32"><path class="l" d="M3 28C7 10 8 7 20 7"/><circle class="w" cx="25" cy="7" r="5.500"/><path class="f" d="M1 31V20l7 3z"/></symbol>
        <symbol id="dimbig" viewBox="0 0 32 32"><path class="l" d="M2 1v30M30 1v30"/><path class="b" d="M3 6h26"/><path class="fb" d="M2 6l4-2v4zM30 6l-4-2v4z"/><path d="M5 28l6-1M27 28l-6-1M8 21l5 3M24 21l-5 3M16 17v5" stroke="#f5a80f" stroke-width="3"/></symbol>
        <symbol id="blkedit" viewBox="0 0 32 32"><path class="w" d="M4 10h14v12H4z"/><circle class="w" cx="19" cy="25" r="6"/><path class="bolt" d="M27 1 17 11h5l-3 7 12-11h-6l4-6z"/><path class="p" d="M1 20h4v4H1z"/></symbol>
        <symbol id="attedit" viewBox="0 0 32 32"><path class="w" d="M4 10l7-3h16l-2 12-7 11L7 17z"/><path d="M10 12l8 9 6-4" fill="none" stroke="#333" stroke-width="2"/><path d="M19 18 28 4" stroke="#f0a11c" stroke-width="5"/></symbol>
        <symbol id="group" viewBox="0 0 32 32"><path d="M1 1h18v30H1z" fill="none" stroke="#ddd" stroke-dasharray="2 1"/><path d="M5 5h12v11H5z" fill="#f3ee9f" stroke="#222"/><circle class="w" cx="10" cy="24" r="5.500"/><path d="M22 2v19M13 11h18M15 4l14 14M29 4 15 18M13 22l9-10" stroke="#bfe2ff" stroke-width="1.500"/><circle cx="22" cy="11" r="4" fill="#fff"/></symbol>
        <symbol id="ungroup" viewBox="0 0 32 32"><path d="M2 2h14M2 2v4" stroke="#ddd" stroke-dasharray="2 1"/><path d="M4 6h10v9H4z" fill="#f3ee9f" stroke="#222"/><circle class="w" cx="10" cy="25" r="5"/><path d="M19 18 31 2" stroke="#f3c12c" stroke-width="4"/></symbol>
        <symbol id="grpedit" viewBox="0 0 32 32"><path d="M1 1h17v30H1z" fill="none" stroke="#ddd" stroke-dasharray="2 1"/><path class="w" d="M6 5h8v8H6z"/><circle class="bl" cx="10" cy="23" r="5"/><path class="l" d="M21 10h9M26 5v9M21 23h9"/></symbol>
        <symbol id="grpsel" viewBox="0 0 32 32"><path d="M1 1h17v30H1z" fill="none" stroke="#6fa8ff" stroke-dasharray="2 1"/><path d="M5 5h9v9H5z" fill="#f3ee9f" stroke="#222"/><circle class="w" cx="9" cy="23" r="5"/><path d="M17 9v16l4-3 4 8 3-2-4-7h6z" fill="#fff59a" stroke="#333"/></symbol>
        <symbol id="quicksel" viewBox="0 0 32 32"><path class="l" d="M1 14h7M12 2v8M12 18v8M16 14h3M8 10h8v8H8z"/><path class="bolt" d="M28 1 19 9h5l-2 7 9-9h-5l4-6z"/><path class="w" d="M18 17h12v14H18z"/><path d="M20 21h8M20 25h8M22 19v10M26 19v10" stroke="#555"/></symbol>
        <symbol id="ptstyle" viewBox="0 0 32 32"><path class="l" d="M16 1v11M16 20v11M1 16h11M20 16h11M12 12h8v8h-8zM16 14v4M14 16h4"/></symbol>
        <symbol id="calc" viewBox="0 0 32 32"><path class="w" d="M6 1h20v30H6z"/><path d="M9 4h14v5H9z" fill="#555"/><path d="M9 14h14M9 19h14M9 24h14" stroke="#555" stroke-width="3" stroke-dasharray="3 2"/></symbol>
        <symbol id="paste" viewBox="0 0 32 32"><path d="M2 3h22v24H2z" fill="#b6aba0" stroke="#222"/><path class="w" d="M7 5l3-4h7l3 4zM10 10h16l4 5v15H10z"/><path class="w" d="M25 10v6h5z"/></symbol>
        <symbol id="cut" viewBox="0 0 32 32"><path d="M4 2l18 20M28 2 10 22" stroke="#eee" stroke-width="4"/><circle cx="7" cy="25" r="4" fill="none" stroke="#222" stroke-width="3"/><circle cx="25" cy="25" r="4" fill="none" stroke="#222" stroke-width="3"/></symbol>
        <symbol id="copyclip" viewBox="0 0 32 32"><path class="w" d="M2 1h14l4 5v18H2z"/><path class="w" d="M10 7h14l6 6v18H10z"/><path class="w" d="M24 7v6h6z"/></symbol>
        <symbol id="base" viewBox="0 0 32 32"><path class="w" d="M3 3h11v9h16v15H3z"/></symbol>
        <symbol id="wrench" viewBox="0 0 32 32"><path d="M10 2c-9 2-10 9-6 13 2 1 4 1 6 1l14 14c4 2 7-1 5-4L15 12c1-4-1-8-5-10l-1 8-3-1z" fill="#ccc"/></symbol>

        <!-- status bar -->
        <symbol id="s-grid" viewBox="0 0 32 32"><path d="M7 2v28M13 2v28M19 2v28M25 2v28M2 7h28M2 13h28M2 19h28M2 25h28" stroke="#ccc" stroke-width="1.500"/></symbol>
        <symbol id="s-snap" viewBox="0 0 32 32"><path d="M3 4h28M3 10h28M3 16h28M3 22h28M3 28h28" stroke="#2d8cff" stroke-width="3" stroke-dasharray="2 3"/></symbol>
        <symbol id="s-dyn" viewBox="0 0 32 32"><path d="M7 2v14M1 9h13" stroke="#2d94ff" stroke-width="3"/><path d="M12 18h19v10H12z" fill="#2d94ff"/></symbol>
        <symbol id="s-ortho" viewBox="0 0 32 32"><path class="g" d="M6 3v25h23M6 18h9v10"/></symbol>
        <symbol id="s-polar" viewBox="0 0 32 32"><path class="g" d="M25 20A11 11 0 1 1 22 7M14 15h17M14 15 24 3"/></symbol>
        <symbol id="s-iso" viewBox="0 0 32 32"><path class="g" d="M2 1l24 29M16 1v30"/></symbol>
        <symbol id="s-otrack" viewBox="0 0 32 32"><path class="g" d="M25 4 3 28h27"/><path d="M10 15h7v7h-7z" fill="#bbb"/></symbol>
        <symbol id="s-osnap" viewBox="0 0 32 32"><path d="M6 6h22v22H6z" fill="none" stroke="#2d94ff" stroke-width="3"/><path d="M2 2h8v8H2z" fill="#19e019" stroke="#060" stroke-width="2"/></symbol>
        <symbol id="s-lwt" viewBox="0 0 32 32"><path d="M3 5h26M3 11h14M3 18h26M3 25h17" stroke="#bbb" stroke-width="4"/></symbol>
        <symbol id="s-3d" viewBox="0 0 32 32"><path d="M5 9l12-5 11 5v14l-11 7-12-7zM5 9l12 5 11-5M17 14v16" fill="none" stroke="#2d94ff" stroke-width="3"/><path d="M2 4h8v8H2z" fill="#19e019" stroke="#060" stroke-width="2"/></symbol>
        <symbol id="s-anno" viewBox="0 0 32 32"><path d="M12 2h5l2 15 10 11v3l-14-7L2 31v-3l9-11z" fill="#2d94ff"/><circle cx="22" cy="7" r="5" fill="none" stroke="#2d94ff" stroke-width="2"/></symbol>
        <symbol id="s-annoadd" viewBox="0 0 32 32"><path d="M12 4l4-3 3 16 10 11v3l-14-7L2 31v-3l9-11z" fill="#bbb"/><path d="M23 1l-5 7h5l-4 8 10-10h-5z" fill="#bbb"/></symbol>
        <symbol id="s-annoscl" viewBox="0 0 32 32"><path d="M16 1l4 16 10 11v3l-14-7L2 31v-3l10-11z" fill="#bbb"/></symbol>
        <symbol id="s-gear" viewBox="0 0 32 32"><path d="M16 3v26M3 16h26M7 7l18 18M25 7 7 25" stroke="#bbb" stroke-width="4"/><circle cx="16" cy="16" r="7" fill="none" stroke="#bbb" stroke-width="5"/><circle cx="16" cy="16" r="4" fill="#4c4c4c"/></symbol>
        <symbol id="s-plus" viewBox="0 0 32 32"><path d="M16 3v26M3 16h26" stroke="#ccc" stroke-width="3"/></symbol>
        <symbol id="s-iso2" viewBox="0 0 32 32"><path class="g" d="M4 2h12v13H4zM13 20l6 10H7z"/><circle class="g" cx="23" cy="14" r="5.500"/></symbol>
        <symbol id="s-perf" viewBox="0 0 32 32"><circle cx="16" cy="16" r="14" fill="#0b57a4" stroke="#1f8fff" stroke-width="3"/><path d="M12 21l9-8" stroke="#3da2ff" stroke-width="3"/></symbol>
        <symbol id="s-full" viewBox="0 0 32 32"><path class="g" d="M3 6h27v20H3z"/><path d="M7 22v-8l8 8zM26 10v8l-8-8z" fill="#ccc"/></symbol>
        <symbol id="s-menu" viewBox="0 0 32 32"><path d="M3 6h26M3 16h26M3 26h26" stroke="#ccc" stroke-width="3"/></symbol>
    </svg>

    <div class="app">
        <header class="titlebar">
            <button class="appmenu">
                <svg viewBox="0 0 26 34"><path d="M1 32 10 2h6l9 30h-6l-3-9-9 1-2 8z" fill="#c9202c"/><path d="M10 2h3l-6 22-6 8zM8 18l10 2-2 3-9 1z" fill="#8d0f18"/><path d="M13 10 10 18l6 1z" fill="#999"/></svg>
                <span class="caret dark"></span>
            </button>
            <div class="qat">
                <button><svg><use href="#new"/></svg></button>
                <button><svg><use href="#open"/></svg></button>
                <button><svg><use href="#save"/></svg></button>
                <button><svg><use href="#saveas"/></svg></button>
                <button><svg><use href="#print"/></svg></button>
                <button><svg><use href="#undo"/></svg></button>
                <span class="caret"></span>
                <button><svg><use href="#redo"/></svg></button>
                <span class="caret dim"></span>
                <div class="combo workspace">
                    <svg><use href="#gear"/></svg>
                    <select aria-label="工作空间"><option>5</option></select>
                    <span class="caret lg"></span>
                </div>
                <button><svg><use href="#sheet"/></svg></button>
                <button><svg><use href="#plot"/></svg></button>
                <button><svg><use href="#preview"/></svg></button>
                <button><svg><use href="#teapot"/></svg></button>
                <button><svg><use href="#match"/></svg></button>
                <button><svg><use href="#prop"/></svg></button>
                <button class="more"><span class="caret lg"></span></button>
            </div>
            <div class="title"><span>Autodesk AutoCAD 2017</span><span>Drawing1.dwg</span></div>
            <div class="infocenter">
                <span class="tri-right"></span>
                <input type="text" placeholder="鍵入关鍵字或短语" aria-label="搜索">
                <button><svg><use href="#binoc"/></svg></button>
                <button class="login"><svg><use href="#user"/></svg>登录</button>
                <span class="caret"></span>
                <button><svg><use href="#exch"/></svg></button>
                <button><svg><use href="#a360"/></svg></button>
                <span class="caret"></span>
                <button class="expand"><svg viewBox="0 0 12 12"><path d="M1 1l5 5-5 5zM6 1l5 5-5 5z"/></svg></button>
            </div>
            <div class="winctl">
                <button><svg viewBox="0 0 16 16"><path d="M0 8h16"/></svg></button>
                <button><svg viewBox="0 0 16 16"><path d="M1 1h14v14H1z"/></svg></button>
                <button><svg viewBox="0 0 16 16"><path d="M0 0l16 16M16 0 0 16"/></svg></button>
            </div>
        </header>

        <nav class="menubar">
            <button>文件(F)</button>
            <button>编辑(E)</button>
            <button>视图(V)</button>
            <button>插入(I)</button>
            <button>格式(O)</button>
            <button>工具(T)</button>
            <button>绘图(D)</button>
            <button>标注(N)</button>
            <button>修改(M)</button>
            <button>参数(P)</button>
            <button>窗口(W)</button>
            <button>帮助(H)</button>
            <svg class="mdi" viewBox="0 0 66 18"><path d="M1 12h14" stroke-width="4"/><path d="M24 7h11v9H24zM29 5V1h11v9h-5" stroke-width="2"/><path d="M51 2l10 12M61 2 51 14" stroke-width="4"/></svg>
        </nav>

        <nav class="tabs">
            <button class="active">默认</button>
            <button>插入</button>
            <button>注释</button>
            <button>参数化</button>
            <button>视图</button>
            <button>管理</button>
            <button>输出</button>
            <button>附加模块</button>
            <button>A360</button>
            <button>精选应用</button>
            <button>BIM 360</button>
            <button>Performance</button>
            <button class="minimize"><svg viewBox="0 0 20 12"><rect width="20" height="12" rx="2" fill="#eee"/><path d="M10 3l4 6H6z" fill="#333"/></svg><span class="caret"></span></button>
        </nav>

        <section class="ribbon">
            <div class="panel">
                <div class="body">
                    <button class="big"><svg><use href="#line"/></svg>直线</button>
                    <button class="big"><svg><use href="#pline"/></svg>多段线</button>
                    <button class="big"><svg><use href="#circle"/></svg>圆<span class="caret"></span></button>
                    <button class="big"><svg><use href="#arc"/></svg>圆弧<span class="caret"></span></button>
                    <div class="col">
                        <button><svg><use href="#rect"/></svg><span class="caret"></span></button>
                        <button><svg><use href="#center"/></svg><span class="caret"></span></button>
                        <button><svg><use href="#hatch"/></svg><span class="caret"></span></button>
                    </div>
                </div>
                <div class="name">绘图<span class="caret lg"></span></div>
            </div>

            <div class="panel">
                <div class="body wide">
                    <div class="col">
                        <button><svg><use href="#move"/></svg>移动</button>
                        <button><svg><use href="#copy"/></svg>复制</button>
                        <button><svg><use href="#stretch"/></svg>拉伸</button>
                    </div>
                    <div class="col">
                        <button><svg><use href="#rotate"/></svg>旋转</button>
                        <button><svg><use href="#mirror"/></svg>镜像</button>
                        <button><svg><use href="#scale"/></svg>缩放</button>
                    </div>
                    <div class="col">
                        <button><svg><use href="#trim"/></svg>修剪<span class="caret"></span></button>
                        <button><svg><use href="#fillet"/></svg>圆角<span class="caret"></span></button>
                        <button><svg><use href="#array"/></svg>阵列<span class="caret"></span></button>
                    </div>
                    <div class="col">
                        <button><svg><use href="#erase"/></svg></button>
                        <button><svg><use href="#explode"/></svg></button>
                        <button><svg><use href="#stamp"/></svg></button>
                    </div>
                </div>
                <div class="name">修改<span class="caret lg"></span></div>
            </div>

            <div class="panel">
                <div class="body loose">
                    <button class="big"><svg><use href="#mtext"/></svg>文字<span class="caret"></span></button>
                    <button class="big"><svg><use href="#dimbig"/></svg>标注</button>
                    <div class="col">
                        <button><svg><use href="#dimlin"/></svg>线性<span class="caret"></span></button>
                        <button><svg><use href="#leader"/></svg>引线<span class="caret"></span></button>
                        <button><svg><use href="#table"/></svg>表格</button>
                    </div>
                </div>
                <div class="name">注释<span class="caret lg"></span></div>
            </div>

            <div class="panel">
                <div class="body">
                    <button class="big"><svg><use href="#layerprop"/></svg>图层<br>特性</button>
                    <div class="layers">
                        <div class="combo">
                            <svg><use href="#on"/></svg><svg><use href="#sun"/></svg><svg><use href="#unlock"/></svg>
                            <span class="swatch"></span>
                            <select aria-label="图层"><option>0</option></select>
                            <span class="caret lg"></span>
                        </div>
                        <div class="line">
                            <button><svg><use href="#loff"/></svg></button>
                            <button><svg><use href="#liso"/></svg></button>
                            <button><svg><use href="#lfrz"/></svg></button>
                            <button><svg><use href="#llck"/></svg></button>
                            <button><svg><use href="#lcur"/></svg>置为当前</button>
                        </div>
                        <div class="line">
                            <button><svg><use href="#lon"/></svg></button>
                            <button><svg><use href="#liso"/></svg></button>
                            <button><svg><use href="#lthw"/></svg></button>
                            <button><svg><use href="#lulk"/></svg></button>
                            <button><svg><use href="#lmch"/></svg>匹配图层</button>
                        </div>
                    </div>
                </div>
                <div class="name">图层<span class="caret lg"></span></div>
            </div>

            <div class="panel">
                <div class="body">
                    <button class="big"><svg><use href="#insert"/></svg>插入<span class="caret"></span></button>
                    <div class="col tight">
                        <button><svg><use href="#block"/></svg>创建</button>
                        <button><svg><use href="#blkedit"/></svg>编辑</button>
                        <button><svg><use href="#attedit"/></svg>编辑属性<span class="caret"></span></button>
                    </div>
                </div>
                <div class="name">块<span class="caret lg"></span></div>
            </div>

            <div class="panel">
                <div class="body">
                    <button class="big"><svg><use href="#match"/></svg>特性<br>匹配</button>
                    <div class="props">
                        <label><svg><use href="#wheel"/></svg>
                            <span class="combo"><span class="swatch framed"></span><select><option>ByLayer</option></select><span class="caret lg"></span></span>
                        </label>
                        <label><svg><use href="#lweight"/></svg>
                            <span class="combo"><span class="stroke thick"></span><select><option>ByLayer</option></select><span class="caret lg"></span></span>
                        </label>
                        <label><svg><use href="#ltype"/></svg>
                            <span class="combo"><span class="stroke"></span><select><option>ByLayer</option></select><span class="caret lg"></span></span>
                        </label>
                    </div>
                </div>
                <div class="name">特性<span class="caret lg"></span><svg class="launch" viewBox="0 0 8 8"><path d="M1 1l5 5M7 1v6H1"/></svg></div>
            </div>

            <div class="panel">
                <div class="body">
                    <button class="big"><svg><use href="#group"/></svg>组</button>
                    <div class="col end">
                        <button><svg><use href="#ungroup"/></svg></button>
                        <button><svg><use href="#grpedit"/></svg></button>
                        <button class="pressed"><svg><use href="#grpsel"/></svg></button>
                    </div>
                </div>
                <div class="name">组<span class="caret lg"></span></div>
            </div>

            <div class="panel">
                <div class="body loose">
                    <button class="big"><svg><use href="#dist"/></svg>测量<span class="caret"></span></button>
                    <div class="col end">
                        <button><svg><use href="#quicksel"/></svg></button>
                        <button><svg><use href="#ptstyle"/></svg></button>
                        <button><svg><use href="#calc"/></svg></button>
                    </div>
                </div>
                <div class="name">实用工具<span class="caret lg"></span></div>
            </div>

            <div class="panel">
                <div class="body loose">
                    <button class="big"><svg><use href="#paste"/></svg>粘贴<span class="caret"></span></button>
                    <div class="col end">
                        <button><svg><use href="#cut"/></svg></button>
                        <button><svg><use href="#copyclip"/></svg></button>
                    </div>
                </div>
                <div class="name">剪贴板</div>
            </div>

            <div class="panel">
                <div class="body">
                    <button class="big fill"><svg><use href="#base"/></svg>基点<span class="caret"></span></button>
                </div>
                <div class="name last">视图<span class="caret lg"></span><svg class="launch" viewBox="0 0 8 8"><path d="M1 1l5 5M7 1v6H1"/></svg></div>
            </div>
        </section>

        <div class="filetabs">
            <button class="filetab">开始</button>
            <button class="filetab active">Drawing1*<svg viewBox="0 0 12 12"><path d="M1 1l10 10M11 1 1 11"/></svg></button>
            <button class="addtab">+</button>
        </div>

        <div class="toolrow">
            <div class="toolbar"><i class="grip"></i>
                <button><svg><use href="#orbit"/></svg></button>
                <button><svg><use href="#forbit"/></svg></button>
                <button><svg><use href="#corbit"/></svg></button>
            </div>
            <div class="toolbar"><i class="grip"></i>
                <button><svg><use href="#dist"/></svg></button>
                <button><svg><use href="#mrad"/></svg></button>
                <button><svg><use href="#mang"/></svg></button>
                <button><svg><use href="#marea"/></svg></button>
                <button><svg><use href="#mvol"/></svg></button>
            </div>
            <div class="toolbar"><i class="grip"></i>
                <button><svg><use href="#wf2d"/></svg></button>
                <i class="sep"></i>
                <button><svg><use href="#wf"/></svg></button>
                <button><svg><use href="#hidden"/></svg></button>
                <button><svg><use href="#realistic"/></svg></button>
                <button><svg><use href="#concept"/></svg></button>
                <i class="sep"></i>
                <button><svg><use href="#vsman"/></svg></button>
            </div>
            <div class="toolbar"><i class="grip"></i>
                <button><svg><use href="#ucs"/></svg></button>
                <button><svg><use href="#ucsman"/></svg></button>
                <i class="sep"></i>
                <div class="pick"><svg><use href="#globe"/></svg><select aria-label="UCS"><option>世界</option></select><svg class="down" viewBox="0 0 12 8"><path d="M1 1l5 6 5-6"/></svg></div>
            </div>
            <div class="toolbar"><i class="grip"></i>
                <button><svg><use href="#pan"/></svg></button>
                <button><svg><use href="#zoom"/></svg></button>
                <button class="fly"><svg><use href="#orbit"/></svg></button>
                <button class="fly"><svg><use href="#camera"/></svg></button>
                <button class="fly"><svg><use href="#walk"/></svg></button>
                <i class="sep"></i>
                <div class="pick short"><select aria-label="视图"><option></option></select><svg class="down" viewBox="0 0 12 8"><path d="M1 1l5 6 5-6"/></svg></div>
            </div>
            <div class="toolbar"><i class="grip"></i>
                <button><svg><use href="#erase"/></svg></button>
                <button><svg><use href="#copy"/></svg></button>
                <button><svg><use href="#mirror"/></svg></button>
                <button><svg><use href="#offset"/></svg></button>
                <button class="fly"><svg><use href="#array"/></svg></button>
                <button><svg><use href="#move"/></svg></button>
                <button><svg><use href="#rotate"/></svg></button>
                <button><svg><use href="#scale"/></svg></button>
                <button><svg><use href="#stretch"/></svg></button>
                <button><svg><use href="#trim"/></svg></button>
                <button><svg><use href="#extend"/></svg></button>
                <button><svg><use href="#breakpt"/></svg></button>
                <button><svg><use href="#break"/></svg></button>
                <button><svg><use href="#join"/></svg></button>
                <button><svg><use href="#chamfer"/></svg></button>
                <button><svg><use href="#fillet"/></svg></button>
                <button><svg><use href="#blend"/></svg></button>
                <button><svg><use href="#explode"/></svg></button>
            </div>
        </div>

        <div class="toolrow second">
            <div class="toolbar"><i class="grip"></i>
                <button><svg><use href="#psolid"/></svg></button>
                <button><svg><use href="#box"/></svg></button>
                <button><svg><use href="#wedge"/></svg></button>
                <button><svg><use href="#cone"/></svg></button>
                <button><svg><use href="#sphere"/></svg></button>
                <button><svg><use href="#cyl"/></svg></button>
                <button><svg><use href="#torus"/></svg></button>
                <button><svg><use href="#pyr"/></svg></button>
                <button><svg><use href="#helix"/></svg></button>
                <button><svg><use href="#plane"/></svg></button>
                <i class="sep"></i>
                <button><svg><use href="#extrude"/></svg></button>
                <button><svg><use href="#presspull"/></svg></button>
                <button><svg><use href="#sweep"/></svg></button>
                <button><svg><use href="#revolve"/></svg></button>
                <button><svg><use href="#loft"/></svg></button>
                <i class="sep"></i>
                <button><svg><use href="#union"/></svg></button>
                <button><svg><use href="#subtract"/></svg></button>
                <button><svg><use href="#intersect"/></svg></button>
                <i class="sep"></i>
                <button><svg><use href="#move3d"/></svg></button>
                <button><svg><use href="#rot3d"/></svg></button>
                <button><svg><use href="#align3d"/></svg></button>
                <button><svg><use href="#array3d"/></svg></button>
            </div>
            <div class="toolbar floating"><i class="grip"></i>
                <button class="fly"><svg><use href="#autocon"/></svg></button>
                <button><svg><use href="#gcon"/></svg></button>
                <button><svg><use href="#conhalf"/></svg></button>
                <button><svg><use href="#conshow"/></svg></button>
                <button><svg><use href="#conhide"/></svg></button>
                <i class="sep"></i>
                <button class="fly"><svg><use href="#dcon"/></svg></button>
                <button><svg><use href="#dconhalf"/></svg></button>
                <button><svg><use href="#dconshow"/></svg></button>
                <button><svg><use href="#infer"/></svg></button>
                <i class="sep"></i>
                <button><svg><use href="#delcon"/></svg></button>
                <button><svg><use href="#conset"/></svg></button>
                <button><svg><use href="#params"/></svg></button>
                <i class="sep"></i>
                <svg class="close" viewBox="0 0 6 6"><path d="M0 0l6 6M6 0 0 6"/></svg>
            </div>
        </div>

        <main class="work">
            <aside class="side">
                <div class="toolbar vertical"><i class="grip"></i>
                    <button><svg><use href="#line"/></svg></button>
                    <button><svg><use href="#xline"/></svg></button>
                    <button><svg><use href="#pline"/></svg></button>
                    <button><svg><use href="#polygon"/></svg></button>
                    <button><svg><use href="#rect"/></svg></button>
                    <button><svg><use href="#arc"/></svg></button>
                    <button><svg><use href="#circle"/></svg></button>
                    <button><svg><use href="#cloud"/></svg></button>
                    <button><svg><use href="#spline"/></svg></button>
                    <button><svg><use href="#ellipse"/></svg></button>
                    <button><svg><use href="#ellipsearc"/></svg></button>
                    <button class="fly"><svg><use href="#insert"/></svg></button>
                    <button><svg><use href="#block"/></svg></button>
                    <button><svg><use href="#point"/></svg></button>
                    <button><svg><use href="#hatch"/></svg></button>
                    <button><svg><use href="#gradient"/></svg></button>
                    <button><svg><use href="#region"/></svg></button>
                    <button><svg><use href="#table"/></svg></button>
                    <button><svg><use href="#mtext"/></svg></button>
                    <button><svg><use href="#addsel"/></svg></button>
                </div>
                <div class="toolbar vertical"><i class="grip"></i>
                    <button><svg><use href="#dimlin"/></svg></button>
                    <button><svg><use href="#dimali"/></svg></button>
                    <button><svg><use href="#dimarc"/></svg></button>
                    <button><svg><use href="#dimord"/></svg></button>
                    <i class="sep"></i>
                    <button><svg><use href="#dimrad"/></svg></button>
                    <button><svg><use href="#dimjog"/></svg></button>
                    <button><svg><use href="#dimdia"/></svg></button>
                    <button><svg><use href="#dimang"/></svg></button>
                    <i class="sep"></i>
                    <button><svg><use href="#dimquick"/></svg></button>
                    <button><svg><use href="#dimbase"/></svg></button>
                    <button><svg><use href="#dimcont"/></svg></button>
                    <button><svg><use href="#dimspace"/></svg></button>
                    <button><svg><use href="#dimbreak"/></svg></button>
                    <i class="sep"></i>
                    <button><svg><use href="#tol"/></svg></button>
                    <button><svg><use href="#cmark"/></svg></button>
                    <button><svg><use href="#inspect"/></svg></button>
                    <button><svg><use href="#jogline"/></svg></button>
                    <i class="sep"></i>
                    <button><svg><use href="#dimedit"/></svg></button>
                    <button><svg><use href="#dimtedit"/></svg></button>
                    <button><svg><use href="#dimupdate"/></svg></button>
                    <i class="sep"></i>
                    <button><svg><use href="#dimstyle"/></svg></button>
                </div>
            </aside>

            <section class="canvas">
                <div class="viewlabel">[−][西南等轴测][概念]</div>

                <svg class="drawing" viewBox="0 0 600 340">
                    <path class="halo" d="M285 23 512 154 227 318 1 187z"/>
                    <path d="M285 23 512 154 227 318 1 187z" fill="none" stroke="#0a1f5c" stroke-width="2"/>
                    <path d="M590 243h8v8h-8z" fill="#fff" stroke="#111"/>
                </svg>

                <svg class="ucsicon" viewBox="0 0 90 64">
                    <path d="M40 58 8 37" stroke="#3fae49" stroke-width="5"/>
                    <path d="M42 57 75 38" stroke="#b34a4a" stroke-width="6"/>
                    <path d="M41 58V18" stroke="#3b5d9c" stroke-width="5"/>
                    <path d="M39 2h12L39 14h12" fill="none" stroke="#1f6fff" stroke-width="1.500"/>
                    <path d="M3 21l6 6 6-6M9 27v6" fill="none" stroke="#2fae2f" stroke-width="1.500"/>
                    <path d="M73 21l12 11M85 21 73 32" fill="none" stroke="#e04848" stroke-width="1.500"/>
                </svg>

                <div class="viewcube">
                    <svg viewBox="0 0 130 112">
                        <ellipse cx="65" cy="68" rx="56" ry="35" fill="none" stroke="#f8f8f8" stroke-width="13"/>
                        <path d="M65 3 99 20 65 40 30 20z" fill="#efefef"/>
                        <path d="M30 20 65 40V80L32 58z" fill="#e4e4e4"/>
                        <path d="M99 20 65 40V80L97 58z" fill="#dcdcdc"/>
                        <path d="M65 3 99 20 97 58 65 80 32 58 30 20zM30 20l35 20 34-20M65 40v40" fill="none" stroke="#888"/>
                        <g class="cubetext">
                            <text transform="matrix(.8 -.5 .8 .5 57 27)">上</text>
                            <text transform="matrix(.8 .5 0 1 40 52)">左</text>
                            <text transform="matrix(.8 -.5 0 1 74 62)">前</text>
                            <text transform="rotate(-35 19 91)" x="11" y="97">西</text>
                            <text transform="rotate(35 111 91)" x="103" y="97">南</text>
                            <text class="far" transform="rotate(35 26 38)" x="20" y="43">北</text>
                            <text class="far" transform="rotate(-35 105 38)" x="99" y="43">东</text>
                        </g>
                    </svg>
                    <button class="wcs">WCS <svg viewBox="0 0 10 8"><path d="M1 1h8L5 7z"/></svg></button>
                </div>

                <div class="command">
                    <div class="history"><span class="en">EXTRUDE</span></div>
                    <div class="history mid">当前线框密度<span class="en">:  ISOLINES=4, </span>闭合轮廓创建模式<span class="en"> = </span>实体</div>
                    <div class="history low">选择要拉伸的对象或<span class="en"> [</span>模式<span class="en">(MO)]: </span>找到<span class="en"> 1 </span>个</div>
                    <div class="cmdbar">
                        <div class="handle">
                            <i class="dots"></i>
                            <button><svg viewBox="0 0 12 12"><path d="M1 1l10 10M11 1 1 11" stroke="#fff" stroke-width="3"/></svg></button>
                            <button><svg class="tool"><use href="#wrench"/></svg></button>
                        </div>
                        <div class="prompt">
                            <svg><use href="#extrude"/></svg>
                            <span class="caret grey"></span>
                            <label for="cmd"><b class="en">EXTRUDE</b> 选择要拉伸的对象或<span class="en"> [</span><span class="opt">模式<span class="en">(<em>MO</em>)</span></span><span class="en">]:</span></label>
                            <input id="cmd" type="text">
                        </div>
                    </div>
                </div>

                <svg class="watermark" viewBox="0 0 410 200">
                    <g class="mark">
                        <text class="bai" x="3" y="133">Bai</text>
                        <ellipse cx="158" cy="57" rx="16" ry="20"/>
                        <ellipse cx="188" cy="29" rx="15" ry="20"/>
                        <ellipse cx="223" cy="32" rx="16" ry="20"/>
                        <ellipse cx="245" cy="66" rx="16" ry="19"/>
                        <path d="M202 60c13 0 20 14 28 24 12 13 24 22 23 35-2 14-16 17-27 16-16-3-31-3-47 0-12 1-26-4-27-17-1-14 12-22 21-33 9-11 16-25 29-25z"/>
                        <text class="du" x="170" y="123">du</text>
                        <text class="jy" x="262" y="127">经验</text>
                        <text class="site" x="11" y="183">jingyan.baidu.com</text>
                    </g>
                </svg>
            </section>
        </main>

        <footer class="status">
            <div class="cell"><button class="model">模型</button></div>
            <div class="cell">
                <button><svg><use href="#s-grid"/></svg></button>
                <button><svg><use href="#s-snap"/></svg></button><span class="caret lg"></span>
            </div>
            <div class="cell"><button><svg><use href="#s-dyn"/></svg></button></div>
            <div class="cell joined">
                <button><svg><use href="#s-ortho"/></svg></button>
                <button><svg><use href="#s-polar"/></svg></button><span class="caret lg"></span>
                <button><svg><use href="#s-iso"/></svg></button><span class="caret lg"></span>
            </div>
            <div class="cell joined">
                <button><svg><use href="#s-otrack"/></svg></button>
                <button><svg><use href="#s-osnap"/></svg></button><span class="caret lg"></span>
            </div>
            <div class="cell joined"><button><svg><use href="#s-lwt"/></svg></button></div>
            <div class="cell joined"><button><svg><use href="#s-3d"/></svg></button><span class="caret lg"></span></div>
            <div class="cell">
                <button><svg><use href="#s-anno"/></svg></button>
                <button><svg><use href="#s-annoadd"/></svg></button>
                <button><svg><use href="#s-annoscl"/></svg></button>
                <button class="scale">1:1</button><span class="caret lg"></span>
            </div>
            <div class="cell"><button><svg><use href="#s-gear"/></svg></button><span class="caret lg"></span></div>
            <div class="cell joined"><button><svg><use href="#s-plus"/></svg></button></div>
            <div class="cell"><button><svg><use href="#s-iso2"/></svg></button></div>
            <div class="cell"><button><svg><use href="#s-perf"/></svg></button></div>
            <div class="cell thin"></div>
            <div class="cell">
                <button><svg><use href="#s-full"/></svg></button>
                <button><svg><use href="#s-menu"/></svg></button>
            </div>
        </footer>
    </div>
</body>

</html>
```

FILE: styles.css
```css
* {
    box-sizing: border-box;
}

body {
    margin: 0;
    background: #5c5c5c;
    color: #eee;
    font-family: "Noto Sans", "Noto Sans CJK SC", sans-serif;
    font-size: 18px;
    line-height: 24px;
}

button, select, input {
    font: inherit;
    color: inherit;
    background: none;
    border: none;
    padding: 0;
    margin: 0;
}

select {
    appearance: none;
    outline: none;
}

button {
    display: flex;
    align-items: center;
    white-space: nowrap;
}

svg {
    display: block;
    flex: none;
    overflow: visible;
}

.sprite {
    position: absolute;
    width: 0;
    height: 0;
    overflow: hidden;
}

/* icon paints */
.w { fill: url(#gw); stroke: #2b2b30; }
.bl { fill: url(#gb); stroke: #23406f; }
.l { fill: none; stroke: #ddd; stroke-width: 1.5; }
.s { stroke-width: 1; }
.b { fill: none; stroke: #6fa8ff; stroke-width: 1.5; }
.g { fill: none; stroke: #bbb; stroke-width: 2; }
.p { fill: #33415c; stroke: #6fa8ff; stroke-width: 1.5; }
.q { fill: #fff; }
.o { fill: #555; stroke: #fff; stroke-width: 1.5; }
.f { fill: #eee; }
.fb { fill: #6fa8ff; }
.red { fill: #fff; stroke: #d22; stroke-width: 1.5; }
.rule { fill: #f2c22e; stroke: #8a5c12; }
.bolt { fill: #ffc01e; stroke: #a35a08; }
.ring { fill: none; stroke-width: 1.5; }

.app {
    display: flex;
    flex-direction: column;
    height: 100vh;
    border-top: 2px solid #2f3039;
    border-left: 2px solid #3a3a3d;
}

.caret {
    flex: none;
    width: 0;
    height: 0;
    border: 4px solid transparent;
    border-top: 6px solid #fff;
    border-bottom: 0;
}

.caret.lg {
    border-width: 7px 6px 0;
}

.caret.dark { border-top-color: #333; }
.caret.dim { border-top-color: #ccc; }
.caret.grey { border-top-color: #888; }

/* title bar */
.titlebar {
    display: flex;
    align-items: flex-end;
    height: 43px;
    background: #fff;
    position: relative;
}

.appmenu {
    position: absolute;
    left: 10px;
    top: 17px;
    width: 41px;
    height: 41px;
    padding: 2px 2px 8px 4px;
    border: 2px solid #222;
    background: linear-gradient(#bbb, #777);
    z-index: 2;
}

.appmenu svg {
    width: 25px;
    height: 28px;
}

.qat {
    display: flex;
    align-items: center;
    height: 36px;
    margin-left: 61px;
    padding-left: 6px;
    background: linear-gradient(#a8a8a8, #7d7d7d);
    border: 2px solid #666;
    border-bottom: 0;
}

.qat button {
    width: 36px;
    height: 34px;
    justify-content: center;
}

.qat button svg {
    width: 24px;
    height: 24px;
}

.qat > .caret {
    margin: 0 5px;
}

.qat .more {
    flex-direction: column;
    gap: 4px;
    width: 28px;
}

.more::before {
    content: "";
    width: 12px;
    height: 2px;
    background: #fff;
}

.combo {
    display: flex;
    align-items: center;
    height: 33px;
    padding: 0 3px 0 8px;
    border: 2px solid #383838;
    background: linear-gradient(#626262, #787878);
}

.combo select {
    flex: 1;
    min-width: 0;
    color: #fff;
    text-align: left;
}

.workspace {
    width: 270px;
    padding-left: 4px;
    background: linear-gradient(#5a5a5a, #707070);
}

.workspace svg {
    width: 24px;
    height: 24px;
    margin-right: 5px;
}

.workspace select {
    color: #8a8a8a;
}

.title {
    display: flex;
    flex: 1;
    gap: 30px;
    align-self: center;
    padding: 0 0 0 30px;
    color: #000;
    font-size: 19px;
    white-space: nowrap;
}

.infocenter {
    display: flex;
    align-items: center;
    width: 647px;
    height: 36px;
    background: linear-gradient(#a8a8a8, #7d7d7d);
    border: 2px solid #666;
    border-bottom: 0;
}

.tri-right {
    margin: 0 7px;
    border: 6px solid transparent;
    border-left-color: #fff;
    border-right: 0;
}

.infocenter input {
    width: 271px;
    height: 33px;
    padding: 0 4px;
    border: 2px solid #383838;
    background: #757575;
    font-style: italic;
}

.infocenter input::placeholder {
    color: #c4c4c4;
}

.infocenter button {
    width: 36px;
    justify-content: center;
}

.infocenter svg {
    width: 24px;
    height: 24px;
}

.infocenter .login {
    flex: 1;
    justify-content: flex-start;
    gap: 6px;
    padding-left: 6px;
}

.infocenter .caret + button {
    margin-left: 10px;
}

.infocenter .expand {
    width: 44px;
    border-left: 1px solid #aaa;
}

.infocenter .expand svg {
    width: 12px;
    height: 12px;
}

.winctl {
    display: flex;
    align-self: center;
    margin: 0 0 4px 58px;
}

.winctl button {
    width: 70px;
    justify-content: center;
}

.winctl svg {
    width: 16px;
    height: 16px;
    fill: none;
    stroke: #888;
}

/* menus */
.menubar {
    display: flex;
    align-items: center;
    gap: 32px;
    height: 33px;
    padding: 0 10px 0 78px;
    background: linear-gradient(#a8a8a8, #545454);
    border-bottom: 2px solid #333;
}

.mdi {
    width: 66px;
    height: 18px;
    margin-left: auto;
    fill: none;
    stroke: #2e2e2e;
}

.tabs {
    display: flex;
    align-items: flex-end;
    gap: 4px;
    height: 29px;
    padding-left: 8px;
    background: #545454;
    border-bottom: 1px solid #333;
}

.tabs button {
    height: 26px;
    padding: 0 13px;
    color: #ddd;
}

.tabs .active {
    color: #fff;
    background: linear-gradient(#727272, #5f5f5f);
    border: 1px solid #333;
    border-bottom: 0;
    border-radius: 3px 3px 0 0;
}

.tabs .minimize {
    gap: 8px;
    margin-left: 20px;
}

.minimize svg {
    width: 20px;
    height: 12px;
}

/* ribbon */
.ribbon {
    display: grid;
    grid-template-columns: 320fr 339fr 234fr 378fr 202fr 325fr 102fr 114fr 113fr 91fr;
    height: 149px;
    background: #5d5d5d;
    border-bottom: 3px solid #8a8a8a;
}

.panel {
    display: flex;
    flex-direction: column;
    min-width: 0;
    border-right: 2px solid #3e3e3e;
}

.body {
    display: flex;
    flex: 1;
    padding: 6px 4px 0;
}

.body.wide {
    gap: 21px;
    padding-left: 9px;
}

.body.loose {
    gap: 3px;
    padding-left: 7px;
}

.big {
    flex: none;
    flex-direction: column;
    width: 61px;
    padding-top: 4px;
    line-height: 23px;
}

.big svg {
    width: 44px;
    height: 46px;
    margin-bottom: 9px;
}

.big .caret {
    margin-top: 3px;
}

.big.fill {
    flex: 1;
}

.col {
    display: flex;
    flex-direction: column;
    margin-left: 8px;
}

.wide .col, .loose .col, .col.tight {
    margin-left: 0;
}

.body .col.end {
    margin-left: auto;
    margin-right: 2px;
}

.col button {
    height: 36px;
    gap: 7px;
}

.col.end button {
    width: 32px;
    justify-content: center;
}

.col svg, .line svg, .layers .combo svg, .props label > svg {
    width: 24px;
    height: 24px;
}

.col .caret {
    margin-left: 8px;
}

.col .pressed {
    background: linear-gradient(#7c9fd6, #5574ac);
    border: 1px solid #2d4370;
}

.layers {
    flex: 1;
}

.line {
    display: flex;
    gap: 12px;
    padding-left: 4px;
}

.line button {
    height: 36px;
    gap: 6px;
}

.layers .combo {
    gap: 4px;
    margin-bottom: 3px;
    padding-left: 2px;
}

.layers .combo select {
    padding-left: 4px;
}

.swatch {
    width: 21px;
    height: 20px;
    background: #000;
}

.swatch.framed {
    width: 24px;
    height: 23px;
    margin: 0 16px 0 10px;
    border: 1px solid #aaa;
}

.props {
    flex: 1;
}

.props label {
    display: flex;
    align-items: center;
    gap: 4px;
    height: 36px;
}

.props .combo {
    flex: 1;
    padding-right: 1px;
}

.stroke {
    width: 88px;
    height: 2px;
    margin: 0 4px;
    background: #ddd;
}

.stroke.thick {
    height: 5px;
    background: #fff;
}

.name {
    display: flex;
    align-items: center;
    justify-content: center;
    gap: 10px;
    height: 27px;
    background: linear-gradient(#535353, #464646);
    position: relative;
    white-space: nowrap;
}

.name.last {
    padding-right: 24px;
}

.launch {
    position: absolute;
    right: 4px;
    bottom: 8px;
    width: 8px;
    height: 8px;
    fill: none;
    stroke: #fff;
    stroke-width: 2;
}

/* file tabs */
.filetabs {
    display: flex;
    align-items: flex-end;
    height: 38px;
    padding-left: 28px;
    background: #383838;
    border-bottom: 2px solid #555;
}

.filetab {
    width: 190px;
    height: 33px;
    padding: 0 20px;
    color: #aaa;
    background: linear-gradient(#585858, #4e4e4e);
    border-radius: 14px 14px 0 0;
}

.filetab.active {
    justify-content: space-between;
    padding: 0 26px 0 16px;
    color: #fff;
    background: linear-gradient(#888, #5e5e5e);
}

.filetab svg {
    width: 10px;
    height: 10px;
    stroke: #444;
    stroke-width: 3;
}

.addtab {
    width: 32px;
    height: 23px;
    justify-content: center;
    margin: 0 0 3px 4px;
    color: #ccc;
    font-weight: bold;
    background: #5a5a5a;
    border-radius: 4px 10px 4px 10px;
}

/* toolbars */
.toolrow {
    display: flex;
    gap: 2px;
    padding-top: 3px;
}

.second {
    gap: 29px;
    padding: 3px 0 4px;
}

.toolbar {
    display: flex;
    flex: none;
    height: 40px;
    background: #616161;
    border: 1px solid #363636;
}

.toolbar button {
    width: 39px;
    justify-content: center;
    position: relative;
}

.toolbar button svg {
    width: 30px;
    height: 30px;
}

.grip {
    width: 7px;
    background: repeating-linear-gradient(#333 0 1px, #777 1px 3px) 2px 4px / 4px 14px no-repeat, #555;
}

.sep {
    width: 6px;
    margin: 3px 0;
    background: linear-gradient(#999, #999) 3px 0 / 1px 100% no-repeat;
}

.fly::after {
    content: "";
    position: absolute;
    right: 3px;
    bottom: 4px;
    border: 3px solid #000;
    border-top-color: transparent;
    border-left-color: transparent;
}

.pick {
    display: flex;
    align-items: center;
    width: 174px;
    height: 22px;
    padding: 0 6px;
    color: #888;
    background: #ccc;
}

.pick.short {
    width: 139px;
}

.pick svg {
    width: 18px;
    height: 18px;
}

.pick select {
    flex: 1;
    padding-left: 5px;
    font-family: "Noto Sans CJK SC", sans-serif;
    line-height: 20px;
}

.pick .down {
    width: 12px;
    height: 7px;
    fill: none;
    stroke: #999;
}

.close {
    width: 6px;
    height: 6px;
    margin: 4px 1px;
    stroke: #ccc;
    stroke-width: 2;
}

.vertical {
    flex-direction: column;
    width: 41px;
    height: auto;
}

.vertical button {
    height: 38px;
}

.vertical .grip {
    width: auto;
    height: 8px;
    background: repeating-linear-gradient(90deg, #333 0 1px, #777 1px 3px) 4px 2px / 14px 4px no-repeat, #4a4a4a;
}

.vertical .sep {
    width: auto;
    height: 6px;
    margin: 0 2px;
    background: linear-gradient(#eee, #eee) 0 2px / 100% 2px no-repeat;
}

/* work area */
.work {
    display: flex;
    flex: 1;
    min-height: 0;
}

.side {
    display: flex;
    align-items: flex-start;
    gap: 3px;
    width: 89px;
}

.canvas {
    flex: 1;
    position: relative;
    overflow: hidden;
    background: #fff;
    color: #000;
}

.viewlabel {
    padding: 2px 3px;
    font-size: 13px;
    line-height: 22px;
}

.drawing {
    position: absolute;
    left: 576px;
    top: 335px;
    width: 600px;
    height: 340px;
}

.halo {
    fill: none;
    stroke: #b9cffa;
    stroke-width: 6;
}

.ucsicon {
    position: absolute;
    left: 1238px;
    top: 737px;
    width: 90px;
    height: 64px;
}

.viewcube {
    position: absolute;
    right: 18px;
    top: 42px;
    display: flex;
    flex-direction: column;
    align-items: center;
}

.viewcube > svg {
    width: 130px;
    height: 112px;
}

.cubetext {
    font-family: "Noto Sans CJK SC", sans-serif;
    font-size: 17px;
    fill: #999;
}

.far {
    font-size: 13px;
}

.wcs {
    height: 17px;
    margin-top: 15px;
    padding: 0 4px;
    gap: 5px;
    color: #999;
    font-size: 11px;
    background: #e8e8f2;
    border-radius: 4px;
}

.wcs svg {
    width: 9px;
    height: 7px;
    fill: none;
    stroke: #aaa;
}

/* command line */
.command {
    position: absolute;
    left: 404px;
    right: 404px;
    bottom: 1px;
    font-family: "Noto Sans CJK SC", sans-serif;
    font-size: 30px;
    line-height: 36px;
}

.en {
    font-family: "DejaVu Sans Mono", monospace;
    font-size: 26px;
}

.history {
    width: fit-content;
    height: 36px;
    margin: 0 0 8px 91px;
    padding: 0 3px;
    color: #fff;
    background: #999;
    border-radius: 4px;
    white-space: pre;
}

.history.mid {
    background: rgba(110, 110, 110, .85);
}

.history.low {
    margin-bottom: 4px;
    background: #6e6e6e;
}

.cmdbar {
    display: flex;
    align-items: flex-end;
}

.handle {
    display: flex;
    align-items: center;
    gap: 11px;
    width: 80px;
    height: 39px;
    padding-left: 10px;
    background: linear-gradient(#777, #3c3c3c);
    border: 1px solid #666;
    border-radius: 4px 0 0 4px;
}

.dots {
    height: 26px;
    border-left: 2px dotted #999;
}

.handle svg {
    width: 12px;
    height: 12px;
}

.handle .tool {
    width: 22px;
    height: 22px;
}

.prompt {
    display: flex;
    flex: 1;
    align-items: center;
    min-width: 0;
    height: 44px;
    padding-left: 6px;
    background: #c8c8c8;
    border: 2px solid #777;
    border-radius: 4px;
}

.prompt svg {
    width: 24px;
    height: 24px;
}

.prompt .caret {
    margin: 0 13px 0 4px;
}

.prompt label {
    white-space: pre;
}

.prompt input {
    flex: 1;
    min-width: 0;
    height: 36px;
    outline: none;
}

.opt {
    background: #d2d2d2;
    border-radius: 6px;
}

.opt em {
    color: #0000f0;
    font-style: normal;
}

.watermark {
    position: absolute;
    right: 114px;
    bottom: 0;
    width: 410px;
    height: 200px;
}

.mark {
    fill: #fff;
    fill-opacity: .85;
    stroke: #d4d4d4;
    stroke-width: 2;
    font-family: "Liberation Sans", sans-serif;
    font-weight: bold;
}

.bai { font-size: 94px; }
.du { font-size: 52px; }
.site { font-size: 45px; font-weight: normal; font-family: "Noto Sans", sans-serif; stroke-width: 1; }
.jy { font-size: 68px; font-family: "Noto Sans CJK SC", sans-serif; font-weight: 900; }

/* status bar */
.status {
    display: flex;
    justify-content: flex-end;
    gap: 3px;
    height: 45px;
    padding: 2px 0 3px;
    background: #383838;
    border-top: 2px solid #555;
    border-bottom: 2px solid #777;
}

.cell {
    display: flex;
    align-items: center;
    padding: 0 1px;
    background: #4c4c4c;
    border: 1px solid #7d7d7d;
}

.cell.joined {
    margin-left: -4px;
}

.cell button {
    width: 36px;
    height: 100%;
    justify-content: center;
}

.cell svg {
    width: 23px;
    height: 23px;
}

.cell .caret {
    margin: 0 5px;
}

.cell .model {
    width: 42px;
    color: #fff;
    font-weight: bold;
}

.cell .scale {
    width: 22px;
    color: #fff;
}

.cell.thin {
    width: 4px;
}
```
